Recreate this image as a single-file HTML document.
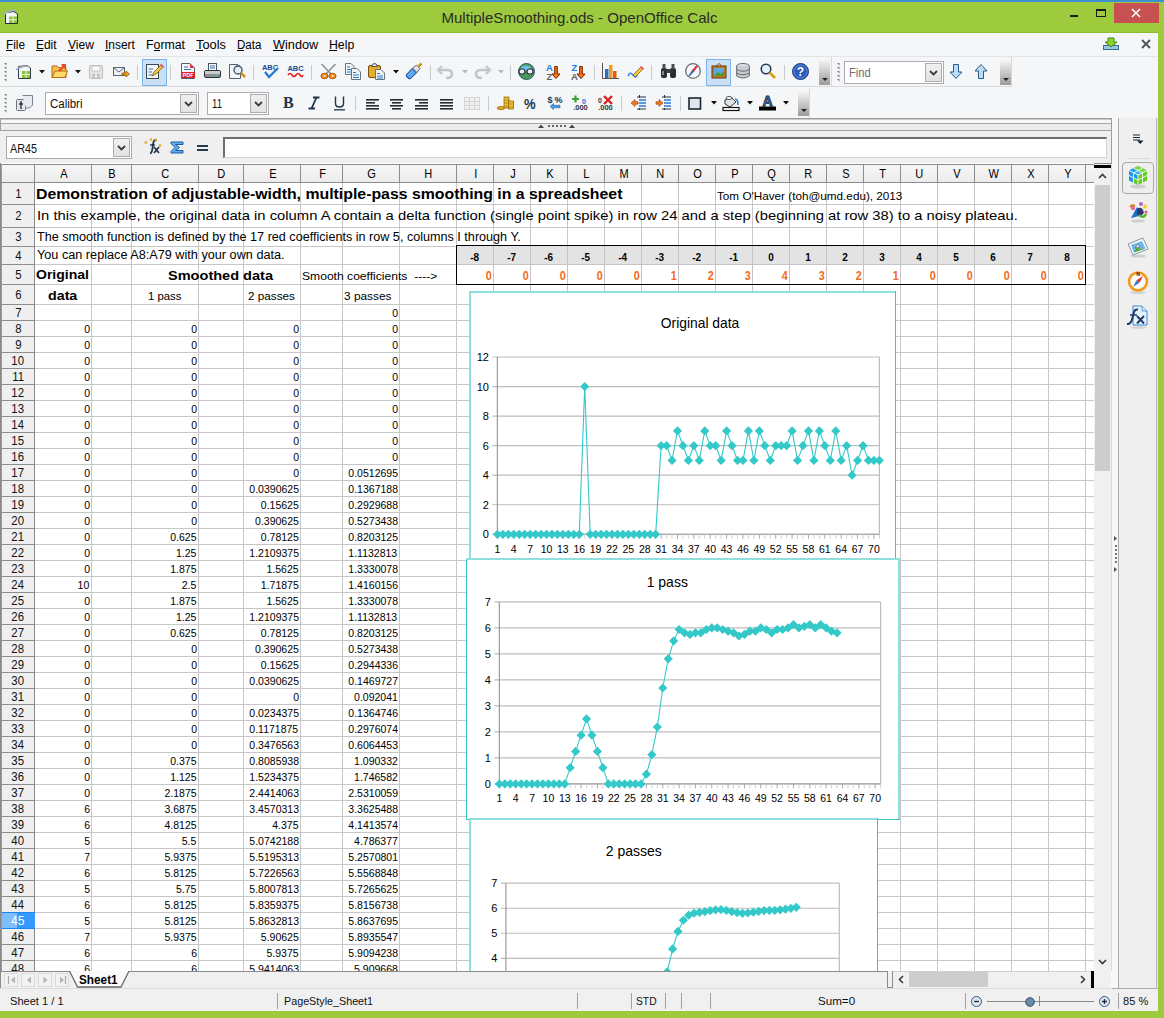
<!DOCTYPE html><html><head><meta charset="utf-8"><style>
*{margin:0;padding:0;box-sizing:border-box}
body{width:1164px;height:1018px;overflow:hidden;position:relative;background:#f5f6f7;font-family:"Liberation Sans",sans-serif}
body div{position:absolute}
.t{white-space:pre}
svg{position:absolute;overflow:visible}
</style></head><body>
<div style="left:0px;top:0px;width:1164px;height:2px;background:#3b8ed0"></div>
<div style="left:0px;top:2px;width:1164px;height:30px;background:#9dcb3d"></div>
<div style="left:0px;top:32px;width:1164px;height:1px;background:#8fbb35"></div>
<svg style="left:3px;top:8px" width="16" height="17" viewBox="0 0 16 17">
<path d="M2.5 4.5 L11 3.5 L14.5 6 V15.5 H2.5 Z" fill="#f2f4f6" stroke="#1e2a36" stroke-width="1"/>
<path d="M0.5 7 Q5 2 13 2.5" stroke="#a8b4bc" stroke-width="1.8" fill="none"/>
<rect x="6" y="8.5" width="8" height="6.5" fill="#8cc43c"/>
<path d="M10 8.5 V15 M6 11.75 H14" stroke="#eaf7d2" stroke-width="1"/>
</svg>
<div class="t" style="left:441.55px;top:10.33px;font-size:15px;line-height:15px;color:#2a2a2a;transform:scaleX(1.0040);transform-origin:center top;">MultipleSmoothing.ods - OpenOffice Calc</div>
<div style="left:1070px;top:15px;width:8px;height:2px;background:#1a1a1a"></div>
<div style="left:1096px;top:9px;width:10px;height:8px;border:1px solid #1a1a1a;border-top-width:2px"></div>
<div style="left:1114px;top:3px;width:45px;height:20px;background:#c75050"></div>
<svg style="left:1129px;top:8px" width="14" height="10" viewBox="0 0 14 10"><path d="M3 1 L11 9 M11 1 L3 9" stroke="#fff" stroke-width="1.6"/></svg>
<div style="left:1158px;top:32px;width:6px;height:986px;background:#9dcb3d"></div>
<div style="left:0px;top:1011px;width:1164px;height:7px;background:#9dcb3d"></div>
<div style="left:0px;top:33px;width:1158px;height:24px;background:#f5f6f7"></div>
<div style="left:0px;top:56px;width:1158px;height:1px;background:#e3e4e6"></div>
<div class="t" style="left:5.90px;top:38.66px;font-size:12px;line-height:12px;color:#000;transform:scaleX(0.9811);transform-origin:left top;">File</div>
<div style="left:6px;top:50px;width:6px;height:1px;background:#000"></div>
<div class="t" style="left:36.00px;top:38.66px;font-size:12px;line-height:12px;color:#000;transform:scaleX(0.9963);transform-origin:left top;">Edit</div>
<div style="left:36px;top:50px;width:7px;height:1px;background:#000"></div>
<div class="t" style="left:67.70px;top:38.66px;font-size:12px;line-height:12px;color:#000;transform:scaleX(1.0083);transform-origin:left top;">View</div>
<div style="left:68px;top:50px;width:7px;height:1px;background:#000"></div>
<div class="t" style="left:104.80px;top:38.66px;font-size:12px;line-height:12px;color:#000;transform:scaleX(0.9965);transform-origin:left top;">Insert</div>
<div style="left:105px;top:50px;width:5px;height:1px;background:#000"></div>
<div class="t" style="left:145.80px;top:38.66px;font-size:12px;line-height:12px;color:#000;transform:scaleX(1.0272);transform-origin:left top;">Format</div>
<div style="left:154px;top:50px;width:6px;height:1px;background:#000"></div>
<div class="t" style="left:195.90px;top:38.66px;font-size:12px;line-height:12px;color:#000;transform:scaleX(1.0665);transform-origin:left top;">Tools</div>
<div style="left:196px;top:50px;width:7px;height:1px;background:#000"></div>
<div class="t" style="left:236.90px;top:38.66px;font-size:12px;line-height:12px;color:#000;transform:scaleX(0.9609);transform-origin:left top;">Data</div>
<div style="left:237px;top:50px;width:7px;height:1px;background:#000"></div>
<div class="t" style="left:272.50px;top:38.66px;font-size:12px;line-height:12px;color:#000;transform:scaleX(1.0606);transform-origin:left top;">Window</div>
<div style="left:273px;top:50px;width:11px;height:1px;background:#000"></div>
<div class="t" style="left:328.90px;top:38.66px;font-size:12px;line-height:12px;color:#000;transform:scaleX(1.0218);transform-origin:left top;">Help</div>
<div style="left:329px;top:50px;width:8px;height:1px;background:#000"></div>
<svg style="left:1103px;top:37px" width="17" height="14" viewBox="0 0 17 14">
<rect x="0.5" y="8.5" width="15" height="4" fill="#9cc8e8" stroke="#3a6a8a"/>
<path d="M5 1 H11 V5 H14 L8 10 L2 5 H5 Z" fill="#8fd22a" stroke="#3f8a10" stroke-width="1"/>
</svg>
<svg style="left:1141px;top:39px" width="10" height="10" viewBox="0 0 10 10"><path d="M1 1 L9 9 M9 1 L1 9" stroke="#4a525a" stroke-width="1.8"/></svg>
<div style="left:0px;top:57px;width:831px;height:30px;background:#f5f6f7;border-bottom:1px solid #d9dadc"></div>
<div style="left:831px;top:57px;width:181px;height:30px;background:#f5f6f7;border:1px solid #d9dadc;border-top:none"></div>
<div style="left:0px;top:88px;width:810px;height:30px;background:#f5f6f7;border-right:1px solid #d9dadc"></div>
<svg style="left:4px;top:63px" width="3" height="3" viewBox="0 0 3 3"><path d="M0 0 H2.5 V2.5 Z" fill="#7a7a7a"/></svg>
<svg style="left:4px;top:67px" width="3" height="3" viewBox="0 0 3 3"><path d="M0 0 H2.5 V2.5 Z" fill="#7a7a7a"/></svg>
<svg style="left:4px;top:71px" width="3" height="3" viewBox="0 0 3 3"><path d="M0 0 H2.5 V2.5 Z" fill="#7a7a7a"/></svg>
<svg style="left:4px;top:75px" width="3" height="3" viewBox="0 0 3 3"><path d="M0 0 H2.5 V2.5 Z" fill="#7a7a7a"/></svg>
<svg style="left:4px;top:79px" width="3" height="3" viewBox="0 0 3 3"><path d="M0 0 H2.5 V2.5 Z" fill="#7a7a7a"/></svg>
<svg style="left:4px;top:94px" width="3" height="3" viewBox="0 0 3 3"><path d="M0 0 H2.5 V2.5 Z" fill="#7a7a7a"/></svg>
<svg style="left:4px;top:98px" width="3" height="3" viewBox="0 0 3 3"><path d="M0 0 H2.5 V2.5 Z" fill="#7a7a7a"/></svg>
<svg style="left:4px;top:102px" width="3" height="3" viewBox="0 0 3 3"><path d="M0 0 H2.5 V2.5 Z" fill="#7a7a7a"/></svg>
<svg style="left:4px;top:106px" width="3" height="3" viewBox="0 0 3 3"><path d="M0 0 H2.5 V2.5 Z" fill="#7a7a7a"/></svg>
<svg style="left:4px;top:110px" width="3" height="3" viewBox="0 0 3 3"><path d="M0 0 H2.5 V2.5 Z" fill="#7a7a7a"/></svg>
<svg style="left:16px;top:63px" width="16" height="17" viewBox="0 0 16 17"><path d="M2.5 3.5 L11 2.5 L14.5 5 V15.5 H2.5 Z" fill="#f4f6f8" stroke="#2d3a48"/><path d="M0 7 Q6 2 13 3.5" stroke="#9ab" stroke-width="1.6" fill="none"/><rect x="6" y="8" width="8" height="7" fill="#8cc43c"/><path d="M10 8 V15 M6 11.5 H14" stroke="#e9f7d0"/></svg>
<svg style="left:39px;top:70px" width="6" height="4" viewBox="0 0 6 4"><path d="M0 0 H6 L3 3.5 Z" fill="#111"/></svg>
<svg style="left:51px;top:63px" width="17" height="16" viewBox="0 0 17 16"><path d="M1 3 H6 L7.5 4.5 H15 V14.5 H1 Z" fill="#f6c04a" stroke="#b86a10"/><path d="M1 14.5 L4 8 H16.5 L14 14.5 Z" fill="#fcd96a" stroke="#b86a10"/><path d="M8 8 L14 2 M10.5 2 H14 V5.5" stroke="#e34c1c" stroke-width="2" fill="none"/></svg>
<svg style="left:75px;top:70px" width="6" height="4" viewBox="0 0 6 4"><path d="M0 0 H6 L3 3.5 Z" fill="#111"/></svg>
<svg style="left:89px;top:65px" width="14" height="14" viewBox="0 0 14 14"><rect x="0.5" y="0.5" width="13" height="13" rx="1.5" fill="#e6e6e6" stroke="#bcbcbc"/><rect x="3" y="1" width="8" height="5" fill="#fafafa" stroke="#c6c6c6"/><rect x="3" y="9" width="3" height="4" fill="#c6c6c6"/><rect x="8" y="9" width="3" height="4" fill="#c6c6c6"/></svg>
<svg style="left:113px;top:67px" width="17" height="11" viewBox="0 0 17 11"><rect x="0.5" y="0.5" width="11" height="8" fill="#eef2f6" stroke="#5a6470"/><path d="M0.5 0.5 L6 5 L11.5 0.5" stroke="#5a6470" fill="none"/><path d="M9 6 H13 V4 L16.5 7 L13 10 V8 H9 Z" fill="#f2a020" stroke="#9a5a00" stroke-width="0.8"/></svg>
<div style="left:137px;top:65px;width:1px;height:15px;background:#c9cbce"></div>
<div style="left:142px;top:59px;width:25px;height:27px;background:#c9e0f7;border:1px solid #7eb4ea"></div>
<svg style="left:146px;top:63px" width="17" height="17" viewBox="0 0 17 17"><rect x="0.5" y="1.5" width="12" height="14" fill="#f4f6f8" stroke="#3c4650"/><path d="M2.5 6 H7 M2.5 9 H6 M2.5 12 H6" stroke="#3a70b0"/><path d="M6 13 L8 9 L15 2 L17 4 L10 11 Z" fill="#f5c93a" stroke="#7a5a10" stroke-width="0.8"/><path d="M14.5 1.5 L17.5 4.5" stroke="#e05a70" stroke-width="2"/></svg>
<div style="left:170px;top:65px;width:1px;height:15px;background:#c9cbce"></div>
<svg style="left:181px;top:63px" width="14" height="16" viewBox="0 0 14 16"><path d="M0.5 0.5 H9 L13.5 5 V15.5 H0.5 Z" fill="#f4f6f8" stroke="#55606a"/><path d="M9 0.5 L13.5 5 H9 Z" fill="#e03a3a"/><path d="M3 4 H7 M3 6.5 H10" stroke="#3a70b0"/><rect x="0" y="9" width="14" height="6" fill="#d82020"/><text x="7" y="14" font-size="5.5" font-weight="bold" fill="#fff" text-anchor="middle" font-family="Liberation Sans">PDF</text></svg>
<svg style="left:204px;top:63px" width="17" height="16" viewBox="0 0 17 16"><rect x="4.5" y="0.5" width="8" height="7" fill="#f4f6f8" stroke="#4a5560"/><path d="M6 3 H11 M6 5 H11" stroke="#3a70b0"/><rect x="0.5" y="7.5" width="16" height="7" rx="1.5" fill="#8a9096" stroke="#2a3038"/><rect x="1" y="8" width="15" height="3" fill="#c8ccd0"/><circle cx="13" cy="12" r="0.9" fill="#4c4"/></svg>
<svg style="left:229px;top:63px" width="17" height="16" viewBox="0 0 17 16"><path d="M0.5 1.5 H9 L11.5 4 V15.5 H0.5 Z" fill="#f4f6f8" stroke="#55606a"/><circle cx="9" cy="7" r="4" fill="#dfefff" stroke="#3a4a58" stroke-width="1.3"/><path d="M12 10 L16 14" stroke="#c8901a" stroke-width="2.5"/></svg>
<div style="left:253px;top:65px;width:1px;height:15px;background:#c9cbce"></div>
<svg style="left:262px;top:63px" width="17" height="16" viewBox="0 0 17 16"><text x="8" y="7" font-size="7.5" font-weight="bold" fill="#1c4a8a" text-anchor="middle" font-family="Liberation Sans">ABC</text><path d="M3 9 L7 14 L16 5" stroke="#2a7ad8" stroke-width="2.4" fill="none"/></svg>
<svg style="left:287px;top:63px" width="17" height="16" viewBox="0 0 17 16"><text x="8.5" y="8" font-size="7.5" font-weight="bold" fill="#1c4a8a" text-anchor="middle" font-family="Liberation Sans">ABC</text><path d="M1 12 Q3 9 5 12 T9 12 T13 12 T16 12" stroke="#e02020" stroke-width="1.6" fill="none"/></svg>
<div style="left:311px;top:65px;width:1px;height:15px;background:#c9cbce"></div>
<svg style="left:320px;top:63px" width="17" height="17" viewBox="0 0 17 17"><path d="M1.5 1 L11.5 11.5 M15.5 1 L5.5 11.5" stroke="#8a9096" stroke-width="1.5"/><ellipse cx="4.5" cy="13" rx="3.6" ry="2.8" fill="#f08a1a" stroke="#a04a00" stroke-width="0.8"/><ellipse cx="12.5" cy="13" rx="3.6" ry="2.8" fill="#f08a1a" stroke="#a04a00" stroke-width="0.8"/><circle cx="4.5" cy="13" r="1" fill="#fde"/><circle cx="12.5" cy="13" r="1" fill="#fde"/></svg>
<svg style="left:345px;top:63px" width="16" height="17" viewBox="0 0 16 17"><path d="M0.5 0.5 H6 L9 3.5 V11.5 H0.5 Z" fill="#f2f5f8" stroke="#6a747e"/><path d="M2 4 H5 M2 6.5 H7 M2 9 H7" stroke="#2a78c8" stroke-width="1"/><path d="M6.5 5.5 H12 L15.5 9 V16.5 H6.5 Z" fill="#f2f5f8" stroke="#6a747e"/><path d="M8 9.5 H11 M8 12 H14 M8 14.5 H14" stroke="#2a78c8" stroke-width="1"/></svg>
<svg style="left:368px;top:63px" width="17" height="17" viewBox="0 0 17 17"><rect x="0.5" y="2.5" width="12" height="12" rx="1.5" fill="#e2b02a" stroke="#7a5010"/><path d="M3.5 3.5 L5 0.8 H8 L9.5 3.5 Z" fill="#e8ecf0" stroke="#555"/><path d="M7.5 6.5 H13 L16.5 10 V16.5 H7.5 Z" fill="#f2f5f8" stroke="#6a747e"/><path d="M9 10.5 H12 M9 13 H15 M9 15 H15" stroke="#2a78c8" stroke-width="1"/></svg>
<svg style="left:393px;top:70px" width="6" height="4" viewBox="0 0 6 4"><path d="M0 0 H6 L3 3.5 Z" fill="#111"/></svg>
<svg style="left:405px;top:63px" width="17" height="17" viewBox="0 0 17 17"><path d="M1 12 L7 5.5 L11.5 10 L5 16 Q2 16 1 12 Z" fill="#4a98e8" stroke="#1a4a98" stroke-width="1"/><path d="M3 12.5 L7.5 8 M4.5 14 L9 9.5" stroke="#9ad0ff" stroke-width="0.9"/><path d="M7.5 5 L11.5 2 L15 5.5 L12 9.5 Z" fill="#dfe4ea" stroke="#445" stroke-width="0.8"/><path d="M13 4 L16.5 0.5" stroke="#c89a20" stroke-width="2.6"/></svg>
<div style="left:430px;top:65px;width:1px;height:15px;background:#c9cbce"></div>
<svg style="left:437px;top:63px" width="17" height="16" viewBox="0 0 17 16"><path d="M5 3 L1 7 L5 11" stroke="#c2c6ca" stroke-width="2.2" fill="none"/><path d="M2 7 H10 Q15 7 15 11 Q15 15 9 15" stroke="#c2c6ca" stroke-width="2.6" fill="none"/></svg>
<svg style="left:462px;top:70px" width="6" height="4" viewBox="0 0 6 4"><path d="M0 0 H6 L3 3.5 Z" fill="#b5b8bb"/></svg>
<svg style="left:474px;top:63px" width="17" height="16" viewBox="0 0 17 16"><path d="M12 3 L16 7 L12 11" stroke="#c2c6ca" stroke-width="2.2" fill="none"/><path d="M15 7 H7 Q2 7 2 11 Q2 15 8 15" stroke="#c2c6ca" stroke-width="2.6" fill="none"/></svg>
<svg style="left:498px;top:70px" width="6" height="4" viewBox="0 0 6 4"><path d="M0 0 H6 L3 3.5 Z" fill="#b5b8bb"/></svg>
<div style="left:510px;top:65px;width:1px;height:15px;background:#c9cbce"></div>
<svg style="left:518px;top:63px" width="17" height="17" viewBox="0 0 17 17"><circle cx="8.5" cy="8.5" r="8" fill="#4a9a5a" stroke="#2a5a70"/><path d="M3 4 Q8 1 13 4 Q10 8 4 9 Z" fill="#6ac0e8"/><rect x="1" y="6" width="6" height="5" rx="2.5" fill="#eef" stroke="#334" stroke-width="1.2"/><rect x="9" y="6" width="6" height="5" rx="2.5" fill="#eef" stroke="#334" stroke-width="1.2"/></svg>
<svg style="left:545px;top:63px" width="17" height="18" viewBox="0 0 17 18"><text x="4.5" y="8" font-size="9.5" font-weight="bold" fill="#1a7ae0" text-anchor="middle" font-family="Liberation Sans">A</text><text x="4.5" y="17" font-size="9.5" font-weight="bold" fill="#5a646e" text-anchor="middle" font-family="Liberation Sans">Z</text><path d="M9.7 3.5 H12.3 V11 H15 L11 15.5 L7 11 H9.7 Z" fill="#f57a10" stroke="#7a1a00" stroke-width="1"/></svg>
<svg style="left:570px;top:63px" width="17" height="18" viewBox="0 0 17 18"><text x="4.5" y="8" font-size="9.5" font-weight="bold" fill="#1a7ae0" text-anchor="middle" font-family="Liberation Sans">Z</text><text x="4.5" y="17" font-size="9.5" font-weight="bold" fill="#5a646e" text-anchor="middle" font-family="Liberation Sans">A</text><path d="M9.7 3.5 H12.3 V11 H15 L11 15.5 L7 11 H9.7 Z" fill="#f57a10" stroke="#7a1a00" stroke-width="1"/></svg>
<div style="left:594px;top:65px;width:1px;height:15px;background:#c9cbce"></div>
<svg style="left:602px;top:63px" width="17" height="16" viewBox="0 0 17 16"><path d="M0.5 0 V15.5 H17" stroke="#555" fill="none"/><rect x="3" y="6" width="3.5" height="9" fill="#2a70c8"/><rect x="7" y="2" width="3.5" height="13" fill="#f0a020"/><rect x="11" y="8" width="3.5" height="7" fill="#e05a1a"/></svg>
<svg style="left:627px;top:63px" width="16" height="16" viewBox="0 0 16 16"><path d="M1 13 Q3 8 6 12 T10 12" stroke="#3a8ae0" stroke-width="1.6" fill="none"/><path d="M6 12 L14 4 L16 6 L8 14 Z" fill="#f5c93a" stroke="#7a5a10" stroke-width="0.8"/><path d="M13.5 3.5 L16.5 6.5" stroke="#e05a70" stroke-width="2"/></svg>
<div style="left:651px;top:65px;width:1px;height:15px;background:#c9cbce"></div>
<svg style="left:660px;top:63px" width="17" height="16" viewBox="0 0 17 16"><rect x="1" y="5" width="6" height="10" rx="2" fill="#2a2e33"/><rect x="10" y="5" width="6" height="10" rx="2" fill="#2a2e33"/><rect x="2.5" y="1" width="3" height="5" fill="#4a4e53"/><rect x="11.5" y="1" width="3" height="5" fill="#4a4e53"/><rect x="6" y="6" width="5" height="4" fill="#3a3e43"/><rect x="2" y="8" width="2" height="4" fill="#889"/></svg>
<svg style="left:685px;top:63px" width="16" height="16" viewBox="0 0 16 16"><circle cx="8" cy="8" r="7.3" fill="#f8f8f8" stroke="#6a6e73" stroke-width="1.3"/><path d="M12 3 L7 9 L9 7 Z M12 3 L9 9 L7 7 Z" fill="#e03030"/><path d="M4 13 L9 7 L7 9 Z M4 13 L7 7 L9 9 Z" fill="#3a70c8"/><path d="M12 3 L4 13" stroke="#3a70c8" stroke-width="1.8"/><path d="M12 3 L8 8" stroke="#e03030" stroke-width="2"/></svg>
<div style="left:706px;top:59px;width:25px;height:27px;background:#c9e0f7;border:1px solid #7eb4ea"></div>
<svg style="left:711px;top:63px" width="16" height="16" viewBox="0 0 16 16"><path d="M5 3 L8 0.5 L11 3" stroke="#8a5a20" fill="none"/><rect x="1" y="3" width="14" height="12" fill="#c07a20" stroke="#6a3a10"/><rect x="3" y="5" width="10" height="8" fill="#60a8e0"/><path d="M3 13 L7 9 L10 11 L13 8 V13 Z" fill="#4a9a30"/></svg>
<svg style="left:736px;top:63px" width="14" height="16" viewBox="0 0 14 16"><ellipse cx="7" cy="3" rx="6.3" ry="2.5" fill="#dde1e5" stroke="#606870"/><path d="M0.7 3 V13 Q7 17 13.3 13 V3" fill="#c8cdd2" stroke="#606870"/><path d="M0.7 6.5 Q7 10 13.3 6.5 M0.7 10 Q7 13.5 13.3 10" stroke="#606870" fill="none"/></svg>
<svg style="left:760px;top:63px" width="16" height="16" viewBox="0 0 16 16"><circle cx="6" cy="6" r="4.8" fill="#dff0ff" stroke="#2a3a4a" stroke-width="1.5"/><path d="M9.5 9.5 L15 15" stroke="#d8a020" stroke-width="2.8"/></svg>
<div style="left:784px;top:65px;width:1px;height:15px;background:#c9cbce"></div>
<svg style="left:792px;top:63px" width="17" height="17" viewBox="0 0 17 17"><circle cx="8.5" cy="8.5" r="8" fill="#2a5ab8" stroke="#1a3a80"/><circle cx="8.5" cy="8.5" r="6.5" fill="none" stroke="#6a9ae8" stroke-width="0.8"/><text x="8.5" y="13.2" font-size="12" font-weight="bold" fill="#fff" text-anchor="middle" font-family="Liberation Sans">?</text></svg>
<div style="left:819px;top:58px;width:11px;height:27px;background:linear-gradient(#fafafa,#9b9b9b)"></div>
<svg style="left:822px;top:78px" width="6" height="4" viewBox="0 0 6 4"><path d="M0 0 H6 L3 3 Z" fill="#222"/></svg>
<svg style="left:837px;top:63px" width="3" height="3" viewBox="0 0 3 3"><path d="M0 0 H2.5 V2.5 Z" fill="#7a7a7a"/></svg>
<svg style="left:837px;top:67px" width="3" height="3" viewBox="0 0 3 3"><path d="M0 0 H2.5 V2.5 Z" fill="#7a7a7a"/></svg>
<svg style="left:837px;top:71px" width="3" height="3" viewBox="0 0 3 3"><path d="M0 0 H2.5 V2.5 Z" fill="#7a7a7a"/></svg>
<svg style="left:837px;top:75px" width="3" height="3" viewBox="0 0 3 3"><path d="M0 0 H2.5 V2.5 Z" fill="#7a7a7a"/></svg>
<svg style="left:837px;top:79px" width="3" height="3" viewBox="0 0 3 3"><path d="M0 0 H2.5 V2.5 Z" fill="#7a7a7a"/></svg>
<div style="left:844px;top:61px;width:100px;height:23px;background:#fff;border:1px solid #abadb3"></div>
<div style="left:925px;top:63px;width:17px;height:19px;background:linear-gradient(#f0f0f0,#e2e2e2);border:1px solid #acacac"></div>
<svg style="left:929.0px;top:69.5px" width="9" height="6" viewBox="0 0 9 6"><path d="M1 1 L4.5 4.5 L8 1" stroke="#3c3c3c" stroke-width="1.8" fill="none"/></svg>
<div class="t" style="left:848.80px;top:66.66px;font-size:12px;line-height:12px;color:#6e6e6e;transform:scaleX(0.9296);transform-origin:left top;">Find</div>
<svg style="left:949px;top:64px" width="14" height="15" viewBox="0 0 14 15"><path d="M4.5 0.5 H9.5 V8 H13 L7 14.5 L1 8 H4.5 Z" fill="#bcdcf4" stroke="#2a5a8a" stroke-width="1"/></svg>
<svg style="left:974px;top:64px" width="14" height="15" viewBox="0 0 14 15"><path d="M4.5 14.5 H9.5 V7 H13 L7 0.5 L1 7 H4.5 Z" fill="#bcdcf4" stroke="#2a5a8a" stroke-width="1"/></svg>
<div style="left:1000px;top:59px;width:11px;height:26px;background:linear-gradient(#fafafa,#9b9b9b)"></div>
<svg style="left:1003px;top:78px" width="6" height="4" viewBox="0 0 6 4"><path d="M0 0 H6 L3 3 Z" fill="#222"/></svg>
<svg style="left:16px;top:95px" width="17" height="16" viewBox="0 0 17 16"><rect x="0.5" y="4.5" width="9" height="11" rx="1" fill="#e4e8ec" stroke="#6a7480"/><path d="M5 6 V14 M3 9 H7" stroke="#333" stroke-width="1.4"/><path d="M6.5 0.5 H16.5 V10 L13.5 13 H10" fill="#e8ecf0" stroke="#7a848e"/></svg>
<div style="left:45px;top:92px;width:154px;height:23px;background:#fff;border:1px solid #abadb3"></div>
<div style="left:180px;top:94px;width:17px;height:19px;background:linear-gradient(#f0f0f0,#e2e2e2);border:1px solid #acacac"></div>
<svg style="left:184.0px;top:100.5px" width="9" height="6" viewBox="0 0 9 6"><path d="M1 1 L4.5 4.5 L8 1" stroke="#3c3c3c" stroke-width="1.8" fill="none"/></svg>
<div class="t" style="left:50.00px;top:98.06px;font-size:12px;line-height:12px;color:#111;transform:scaleX(0.9550);transform-origin:left top;">Calibri</div>
<div style="left:207px;top:92px;width:62px;height:23px;background:#fff;border:1px solid #abadb3"></div>
<div style="left:250px;top:94px;width:17px;height:19px;background:linear-gradient(#f0f0f0,#e2e2e2);border:1px solid #acacac"></div>
<svg style="left:254.0px;top:100.5px" width="9" height="6" viewBox="0 0 9 6"><path d="M1 1 L4.5 4.5 L8 1" stroke="#3c3c3c" stroke-width="1.8" fill="none"/></svg>
<div class="t" style="left:211.70px;top:97.96px;font-size:12px;line-height:12px;color:#111;transform:scaleX(0.8030);transform-origin:left top;">11</div>
<div class="t" style="left:283px;top:95px;font:bold 16px/16px 'Liberation Serif';color:#1e3448">B</div>
<svg style="left:308px;top:97px" width="12" height="12" viewBox="0 0 12 12"><path d="M5 0.5 H11.5 M0.5 11.5 H7 M8.5 0.5 L3.5 11.5" stroke="#1e3448" stroke-width="1.8" fill="none"/></svg>
<svg style="left:333px;top:96px" width="13" height="15" viewBox="0 0 13 15"><path d="M2.5 0.5 V7.5 Q2.5 11 6.5 11 Q10.5 11 10.5 7.5 V0.5" stroke="#1e3448" stroke-width="1.4" fill="none"/><path d="M1 13.8 H12" stroke="#1e3448" stroke-width="1.3"/></svg>
<div style="left:355px;top:96px;width:1px;height:15px;background:#c9cbce"></div>
<svg style="left:366px;top:99px" width="14" height="12" viewBox="0 0 14 12"><rect x="0" y="0" width="13" height="1.6" fill="#222d38"/><rect x="0" y="3" width="9" height="1.6" fill="#222d38"/><rect x="0" y="6" width="13" height="1.6" fill="#222d38"/><rect x="0" y="9" width="13" height="1.6" fill="#222d38"/></svg>
<svg style="left:390px;top:99px" width="14" height="12" viewBox="0 0 14 12"><rect x="0" y="0" width="13" height="1.6" fill="#222d38"/><rect x="2" y="3" width="9" height="1.6" fill="#222d38"/><rect x="0" y="6" width="13" height="1.6" fill="#222d38"/><rect x="2" y="9" width="9" height="1.6" fill="#222d38"/></svg>
<svg style="left:415px;top:99px" width="14" height="12" viewBox="0 0 14 12"><rect x="0" y="0" width="13" height="1.6" fill="#222d38"/><rect x="4" y="3" width="9" height="1.6" fill="#222d38"/><rect x="0" y="6" width="13" height="1.6" fill="#222d38"/><rect x="0" y="9" width="13" height="1.6" fill="#222d38"/></svg>
<svg style="left:440px;top:99px" width="14" height="12" viewBox="0 0 14 12"><rect x="0" y="0" width="13" height="1.6" fill="#222d38"/><rect x="0" y="3" width="13" height="1.6" fill="#222d38"/><rect x="0" y="6" width="13" height="1.6" fill="#222d38"/><rect x="0" y="9" width="13" height="1.6" fill="#222d38"/></svg>
<svg style="left:464px;top:97px" width="17" height="13" viewBox="0 0 17 13"><rect x="0.5" y="0.5" width="15" height="12" fill="#f0f0f0" stroke="#d4d4d4"/><path d="M0.5 4.5 H15.5 M0.5 8.5 H15.5 M5.5 0.5 V12.5 M10.5 0.5 V12.5" stroke="#d4d4d4"/></svg>
<div style="left:488px;top:96px;width:1px;height:15px;background:#c9cbce"></div>
<svg style="left:497px;top:95px" width="17" height="15" viewBox="0 0 17 15"><ellipse cx="4" cy="13" rx="3.8" ry="1.6" fill="#e8a820" stroke="#8a5a00" stroke-width="0.7"/><rect x="7" y="2" width="5" height="11" fill="#f0c030" stroke="#8a5a00" stroke-width="0.7"/><path d="M7 5 H12 M7 8 H12 M7 11 H12" stroke="#a87a10" stroke-width="0.7"/><rect x="11.5" y="6" width="5" height="8" fill="#f0c030" stroke="#8a5a00" stroke-width="0.7"/><path d="M11.5 9 H16.5 M11.5 12 H16.5" stroke="#a87a10" stroke-width="0.7"/></svg>
<div class="t" style="left:523.50px;top:96.77px;font-size:14px;line-height:14px;font-weight:bold;color:#1e3448;transform:scaleX(0.9315);transform-origin:left top;">%</div>
<svg style="left:547px;top:95px" width="17" height="15" viewBox="0 0 17 15"><text x="3" y="8" font-size="9" font-weight="bold" fill="#1e3448" font-family="Liberation Sans" text-anchor="middle">$</text><text x="11.5" y="8" font-size="9" font-weight="bold" fill="#1e3448" font-family="Liberation Sans" text-anchor="middle">%</text><path d="M3 11.5 L6.5 8.5 V10.3 H13 V12.7 H6.5 V14.5 Z" fill="#4aa0e8" stroke="#1a5a9a" stroke-width="0.6"/></svg>
<svg style="left:572px;top:95px" width="17" height="15" viewBox="0 0 17 15"><path d="M3.5 0.5 V7.5 M0 4 H7" stroke="#3aa030" stroke-width="2.2"/><text x="12" y="9" font-size="7" font-weight="bold" fill="#2a6ad8" font-family="Liberation Sans" text-anchor="middle">0</text><text x="8.5" y="15" font-size="7.5" font-weight="bold" fill="#2a3440" font-family="Liberation Sans" text-anchor="middle">.000</text></svg>
<svg style="left:597px;top:95px" width="17" height="15" viewBox="0 0 17 15"><text x="3" y="7.5" font-size="7" font-weight="bold" fill="#2a3440" font-family="Liberation Sans" text-anchor="middle">0</text><text x="8.5" y="15" font-size="7.5" font-weight="bold" fill="#2a3440" font-family="Liberation Sans" text-anchor="middle">.000</text><path d="M7 1 L15 9 M15 1 L7 9" stroke="#e02020" stroke-width="2.4"/></svg>
<div style="left:621px;top:96px;width:1px;height:15px;background:#c9cbce"></div>
<svg style="left:630px;top:95px" width="17" height="15" viewBox="0 0 17 15"><path d="M1 8 L5 4.5 V6.8 H8 V9.2 H5 V11.5 Z" fill="#f07a20" stroke="#a03a00" stroke-width="0.6"/><path d="M7 2 H16 M7 14 H16" stroke="#2a3440" stroke-width="1.2"/><path d="M9 5 H16 M9 8 H16 M9 11 H16" stroke="#2a7ad8" stroke-width="1.4"/><path d="M9.5 0 V3 M9.5 13 V15" stroke="#2a3440"/></svg>
<svg style="left:655px;top:95px" width="17" height="15" viewBox="0 0 17 15"><path d="M8 8 L4 4.5 V6.8 H1 V9.2 H4 V11.5 Z" fill="#f07a20" stroke="#a03a00" stroke-width="0.6"/><path d="M7 2 H16 M7 14 H16" stroke="#2a3440" stroke-width="1.2"/><path d="M9 5 H16 M9 8 H16 M9 11 H16" stroke="#2a7ad8" stroke-width="1.4"/><path d="M9.5 0 V3 M9.5 13 V15" stroke="#2a3440"/></svg>
<div style="left:680px;top:96px;width:1px;height:15px;background:#c9cbce"></div>
<svg style="left:688px;top:97px" width="14" height="13" viewBox="0 0 14 13"><rect x="1" y="1" width="11.5" height="11" fill="#dfe6ee" stroke="#1e2630" stroke-width="1.6"/></svg>
<svg style="left:711px;top:101px" width="6" height="4" viewBox="0 0 6 4"><path d="M0 0 H6 L3 3.5 Z" fill="#111"/></svg>
<svg style="left:722px;top:95px" width="18" height="16" viewBox="0 0 18 16"><path d="M3 5 L9 2 L14 7 L8 12 L3 9 Z" fill="#dde2e8" stroke="#333" stroke-width="1"/><path d="M13 4 Q16 4 16 10" stroke="#2a7ad8" stroke-width="1.6" fill="none"/><ellipse cx="7" cy="3" rx="3" ry="1.5" fill="#fff" stroke="#333" stroke-width="0.8"/><rect x="1" y="12.5" width="16" height="3" fill="#fff" stroke="#111" stroke-width="1.2"/></svg>
<svg style="left:747px;top:101px" width="6" height="4" viewBox="0 0 6 4"><path d="M0 0 H6 L3 3.5 Z" fill="#111"/></svg>
<svg style="left:759px;top:94px" width="17" height="17" viewBox="0 0 17 17"><text x="8.5" y="11.5" font-size="14" font-weight="bold" fill="#4a80b8" stroke="#1a3050" stroke-width="0.9" text-anchor="middle" font-family="Liberation Sans">A</text><rect x="0" y="12.5" width="17" height="4" fill="#000"/></svg>
<svg style="left:783px;top:101px" width="6" height="4" viewBox="0 0 6 4"><path d="M0 0 H6 L3 3.5 Z" fill="#111"/></svg>
<div style="left:798px;top:90px;width:11px;height:26px;background:linear-gradient(#fafafa,#9b9b9b)"></div>
<svg style="left:801px;top:109px" width="6" height="4" viewBox="0 0 6 4"><path d="M0 0 H6 L3 3 Z" fill="#222"/></svg>
<div style="left:0px;top:118px;width:1111px;height:13px;background:#f7f7f7"></div>
<div style="left:0px;top:118px;width:1111px;height:1px;background:#9c9c9c"></div>
<div style="left:0px;top:119px;width:1111px;height:1px;background:#c8c8c8"></div>
<div style="left:0px;top:123px;width:1111px;height:1px;background:#a9a9a9"></div>
<div style="left:0px;top:124px;width:1111px;height:6px;background:#ececec"></div>
<div style="left:0px;top:130px;width:1111px;height:1px;background:#a2a2a2"></div>
<div style="left:0px;top:118px;width:1px;height:13px;background:#a0a0a0"></div>
<svg style="left:538px;top:124px" width="40" height="5" viewBox="0 0 40 5"><path d="M0 4 L3 0.5 L6 4 Z M31 4 L34 0.5 L37 4 Z" fill="#444"/><rect x="10" y="1" width="2" height="2" fill="#666"/><rect x="14" y="1" width="2" height="2" fill="#666"/><rect x="18" y="1" width="2" height="2" fill="#666"/><rect x="22" y="1" width="2" height="2" fill="#666"/><rect x="26" y="1" width="2" height="2" fill="#666"/></svg>
<div style="left:0px;top:131px;width:1111px;height:32px;background:#efefef"></div>
<div style="left:6px;top:136px;width:126px;height:23px;background:#fff;border:1px solid #a9abb0"></div>
<div style="left:113px;top:138px;width:17px;height:19px;background:linear-gradient(#f0f0f0,#e2e2e2);border:1px solid #acacac"></div>
<svg style="left:117.0px;top:144.5px" width="9" height="6" viewBox="0 0 9 6"><path d="M1 1 L4.5 4.5 L8 1" stroke="#3c3c3c" stroke-width="1.8" fill="none"/></svg>
<div class="t" style="left:10.30px;top:143.26px;font-size:12px;line-height:12px;color:#111;transform:scaleX(0.8995);transform-origin:left top;">AR45</div>
<svg style="left:143px;top:137px" width="18" height="18" viewBox="0 0 18 18"><path d="M7 16.5 Q9 16 9.5 11 L10.5 5 Q11 3 13 3" stroke="#1e3448" stroke-width="1.8" fill="none"/><path d="M7 8 H12" stroke="#1e3448" stroke-width="1.4"/><path d="M11 10 L16 16 M16 10 L11 16" stroke="#1e3448" stroke-width="1.7"/><path d="M3 4 L4 5.5 L3 7 L1.5 5.5 Z M8 1 L9 2.5 L8 4 L7 2.5 Z M13 1.5 L14 3 L13 4.5 L12 3 Z M17 7 L18 8.5 L17 10 L16 8.5 Z" fill="#f5c520" stroke="#d09010" stroke-width="0.5"/></svg>
<svg style="left:170px;top:141px" width="14" height="13" viewBox="0 0 14 13"><path d="M1 1 H13 V3.5 H5.5 L9.5 6.5 L5.5 9.5 H13 V12 H1 V10.5 L5 6.5 L1 2.5 Z" fill="#5ab0f0" stroke="#1a5aa0" stroke-width="1"/></svg>
<div style="left:197px;top:145px;width:11px;height:2px;background:#26384a"></div>
<div style="left:197px;top:149px;width:11px;height:2px;background:#26384a"></div>
<div style="left:223px;top:137px;width:884px;height:21px;background:#fff;border:1px solid #d4d4d4;border-top:2px solid #6e6e6e;border-left:2px solid #6e6e6e"></div>
<div style="left:0px;top:163px;width:1094px;height:808px;background:#fff"></div>
<div style="left:1px;top:164px;width:1093px;height:18px;background:linear-gradient(#f7f7f7,#ececec)"></div>
<div style="left:1px;top:182px;width:33px;height:789px;background:#efefef"></div>
<div style="left:0px;top:164px;width:1094px;height:1px;background:#8c8c8c"></div>
<div style="left:0px;top:164px;width:2px;height:807px;background:#9a9a9a"></div>
<div style="left:34px;top:164px;width:1px;height:807px;background:#8c8c8c"></div>
<div style="left:1px;top:182px;width:1093px;height:1px;background:#8c8c8c"></div>
<div style="left:91px;top:165px;width:1px;height:17px;background:#8c8c8c"></div>
<div style="left:91px;top:183px;width:1px;height:788px;background:#c7c7c7"></div>
<div style="left:131px;top:165px;width:1px;height:17px;background:#8c8c8c"></div>
<div style="left:131px;top:183px;width:1px;height:788px;background:#c7c7c7"></div>
<div style="left:198px;top:165px;width:1px;height:17px;background:#8c8c8c"></div>
<div style="left:198px;top:183px;width:1px;height:788px;background:#c7c7c7"></div>
<div style="left:243px;top:165px;width:1px;height:17px;background:#8c8c8c"></div>
<div style="left:243px;top:183px;width:1px;height:788px;background:#c7c7c7"></div>
<div style="left:300px;top:165px;width:1px;height:17px;background:#8c8c8c"></div>
<div style="left:300px;top:183px;width:1px;height:788px;background:#c7c7c7"></div>
<div style="left:342px;top:165px;width:1px;height:17px;background:#8c8c8c"></div>
<div style="left:342px;top:183px;width:1px;height:788px;background:#c7c7c7"></div>
<div style="left:399px;top:165px;width:1px;height:17px;background:#8c8c8c"></div>
<div style="left:399px;top:183px;width:1px;height:788px;background:#c7c7c7"></div>
<div style="left:456px;top:165px;width:1px;height:17px;background:#8c8c8c"></div>
<div style="left:456px;top:183px;width:1px;height:788px;background:#c7c7c7"></div>
<div style="left:493px;top:165px;width:1px;height:17px;background:#8c8c8c"></div>
<div style="left:493px;top:183px;width:1px;height:788px;background:#c7c7c7"></div>
<div style="left:530px;top:165px;width:1px;height:17px;background:#8c8c8c"></div>
<div style="left:530px;top:183px;width:1px;height:788px;background:#c7c7c7"></div>
<div style="left:567px;top:165px;width:1px;height:17px;background:#8c8c8c"></div>
<div style="left:567px;top:183px;width:1px;height:788px;background:#c7c7c7"></div>
<div style="left:604px;top:165px;width:1px;height:17px;background:#8c8c8c"></div>
<div style="left:604px;top:183px;width:1px;height:788px;background:#c7c7c7"></div>
<div style="left:641px;top:165px;width:1px;height:17px;background:#8c8c8c"></div>
<div style="left:641px;top:183px;width:1px;height:788px;background:#c7c7c7"></div>
<div style="left:678px;top:165px;width:1px;height:17px;background:#8c8c8c"></div>
<div style="left:678px;top:183px;width:1px;height:788px;background:#c7c7c7"></div>
<div style="left:715px;top:165px;width:1px;height:17px;background:#8c8c8c"></div>
<div style="left:715px;top:183px;width:1px;height:788px;background:#c7c7c7"></div>
<div style="left:752px;top:165px;width:1px;height:17px;background:#8c8c8c"></div>
<div style="left:752px;top:183px;width:1px;height:788px;background:#c7c7c7"></div>
<div style="left:789px;top:165px;width:1px;height:17px;background:#8c8c8c"></div>
<div style="left:789px;top:183px;width:1px;height:788px;background:#c7c7c7"></div>
<div style="left:826px;top:165px;width:1px;height:17px;background:#8c8c8c"></div>
<div style="left:826px;top:183px;width:1px;height:788px;background:#c7c7c7"></div>
<div style="left:863px;top:165px;width:1px;height:17px;background:#8c8c8c"></div>
<div style="left:863px;top:183px;width:1px;height:788px;background:#c7c7c7"></div>
<div style="left:900px;top:165px;width:1px;height:17px;background:#8c8c8c"></div>
<div style="left:900px;top:183px;width:1px;height:788px;background:#c7c7c7"></div>
<div style="left:937px;top:165px;width:1px;height:17px;background:#8c8c8c"></div>
<div style="left:937px;top:183px;width:1px;height:788px;background:#c7c7c7"></div>
<div style="left:974px;top:165px;width:1px;height:17px;background:#8c8c8c"></div>
<div style="left:974px;top:183px;width:1px;height:788px;background:#c7c7c7"></div>
<div style="left:1011px;top:165px;width:1px;height:17px;background:#8c8c8c"></div>
<div style="left:1011px;top:183px;width:1px;height:788px;background:#c7c7c7"></div>
<div style="left:1048px;top:165px;width:1px;height:17px;background:#8c8c8c"></div>
<div style="left:1048px;top:183px;width:1px;height:788px;background:#c7c7c7"></div>
<div style="left:1085px;top:165px;width:1px;height:17px;background:#8c8c8c"></div>
<div style="left:1085px;top:183px;width:1px;height:788px;background:#c7c7c7"></div>
<div class="t" style="left:59.80px;top:167.66px;font-size:12px;line-height:12px;color:#000;transform:scaleX(0.9200);transform-origin:center top;">A</div>
<div class="t" style="left:108.30px;top:167.66px;font-size:12px;line-height:12px;color:#000;transform:scaleX(0.9200);transform-origin:center top;">B</div>
<div class="t" style="left:161.46px;top:167.66px;font-size:12px;line-height:12px;color:#000;transform:scaleX(0.9200);transform-origin:center top;">C</div>
<div class="t" style="left:217.46px;top:167.66px;font-size:12px;line-height:12px;color:#000;transform:scaleX(0.9200);transform-origin:center top;">D</div>
<div class="t" style="left:268.80px;top:167.66px;font-size:12px;line-height:12px;color:#000;transform:scaleX(0.9200);transform-origin:center top;">E</div>
<div class="t" style="left:318.64px;top:167.66px;font-size:12px;line-height:12px;color:#000;transform:scaleX(0.9200);transform-origin:center top;">F</div>
<div class="t" style="left:367.14px;top:167.66px;font-size:12px;line-height:12px;color:#000;transform:scaleX(0.9200);transform-origin:center top;">G</div>
<div class="t" style="left:424.46px;top:167.66px;font-size:12px;line-height:12px;color:#000;transform:scaleX(0.9200);transform-origin:center top;">H</div>
<div class="t" style="left:474.14px;top:167.66px;font-size:12px;line-height:12px;color:#000;transform:scaleX(0.9200);transform-origin:center top;">I</div>
<div class="t" style="left:509.80px;top:167.66px;font-size:12px;line-height:12px;color:#000;transform:scaleX(0.9200);transform-origin:center top;">J</div>
<div class="t" style="left:545.80px;top:167.66px;font-size:12px;line-height:12px;color:#000;transform:scaleX(0.9200);transform-origin:center top;">K</div>
<div class="t" style="left:583.46px;top:167.66px;font-size:12px;line-height:12px;color:#000;transform:scaleX(0.9200);transform-origin:center top;">L</div>
<div class="t" style="left:618.80px;top:167.66px;font-size:12px;line-height:12px;color:#000;transform:scaleX(0.9200);transform-origin:center top;">M</div>
<div class="t" style="left:656.46px;top:167.66px;font-size:12px;line-height:12px;color:#000;transform:scaleX(0.9200);transform-origin:center top;">N</div>
<div class="t" style="left:693.14px;top:167.66px;font-size:12px;line-height:12px;color:#000;transform:scaleX(0.9200);transform-origin:center top;">O</div>
<div class="t" style="left:730.80px;top:167.66px;font-size:12px;line-height:12px;color:#000;transform:scaleX(0.9200);transform-origin:center top;">P</div>
<div class="t" style="left:767.14px;top:167.66px;font-size:12px;line-height:12px;color:#000;transform:scaleX(0.9200);transform-origin:center top;">Q</div>
<div class="t" style="left:804.46px;top:167.66px;font-size:12px;line-height:12px;color:#000;transform:scaleX(0.9200);transform-origin:center top;">R</div>
<div class="t" style="left:841.80px;top:167.66px;font-size:12px;line-height:12px;color:#000;transform:scaleX(0.9200);transform-origin:center top;">S</div>
<div class="t" style="left:879.14px;top:167.66px;font-size:12px;line-height:12px;color:#000;transform:scaleX(0.9200);transform-origin:center top;">T</div>
<div class="t" style="left:915.46px;top:167.66px;font-size:12px;line-height:12px;color:#000;transform:scaleX(0.9200);transform-origin:center top;">U</div>
<div class="t" style="left:952.80px;top:167.66px;font-size:12px;line-height:12px;color:#000;transform:scaleX(0.9200);transform-origin:center top;">V</div>
<div class="t" style="left:988.14px;top:167.66px;font-size:12px;line-height:12px;color:#000;transform:scaleX(0.9200);transform-origin:center top;">W</div>
<div class="t" style="left:1026.80px;top:167.66px;font-size:12px;line-height:12px;color:#000;transform:scaleX(0.9200);transform-origin:center top;">X</div>
<div class="t" style="left:1063.80px;top:167.66px;font-size:12px;line-height:12px;color:#000;transform:scaleX(0.9200);transform-origin:center top;">Y</div>
<div style="left:2px;top:204px;width:32px;height:1px;background:#8c8c8c"></div>
<div style="left:35px;top:204px;width:1059px;height:1px;background:#c7c7c7"></div>
<div class="t" style="left:14.66px;top:187.86px;font-size:12px;line-height:12px;color:#111;transform:scaleX(0.9500);transform-origin:center top;">1</div>
<div style="left:2px;top:227px;width:32px;height:1px;background:#8c8c8c"></div>
<div style="left:35px;top:227px;width:1059px;height:1px;background:#c7c7c7"></div>
<div class="t" style="left:14.66px;top:210.36px;font-size:12px;line-height:12px;color:#111;transform:scaleX(0.9500);transform-origin:center top;">2</div>
<div style="left:2px;top:246px;width:32px;height:1px;background:#8c8c8c"></div>
<div style="left:35px;top:246px;width:1059px;height:1px;background:#c7c7c7"></div>
<div class="t" style="left:14.66px;top:231.36px;font-size:12px;line-height:12px;color:#111;transform:scaleX(0.9500);transform-origin:center top;">3</div>
<div style="left:2px;top:264px;width:32px;height:1px;background:#8c8c8c"></div>
<div style="left:35px;top:264px;width:1059px;height:1px;background:#c7c7c7"></div>
<div class="t" style="left:14.66px;top:249.86px;font-size:12px;line-height:12px;color:#111;transform:scaleX(0.9500);transform-origin:center top;">4</div>
<div style="left:2px;top:284px;width:32px;height:1px;background:#8c8c8c"></div>
<div style="left:35px;top:284px;width:1059px;height:1px;background:#c7c7c7"></div>
<div class="t" style="left:14.66px;top:268.86px;font-size:12px;line-height:12px;color:#111;transform:scaleX(0.9500);transform-origin:center top;">5</div>
<div style="left:2px;top:304px;width:32px;height:1px;background:#8c8c8c"></div>
<div style="left:35px;top:304px;width:1059px;height:1px;background:#c7c7c7"></div>
<div class="t" style="left:14.66px;top:288.86px;font-size:12px;line-height:12px;color:#111;transform:scaleX(0.9500);transform-origin:center top;">6</div>
<div style="left:2px;top:320px;width:32px;height:1px;background:#8c8c8c"></div>
<div style="left:35px;top:320px;width:1059px;height:1px;background:#c7c7c7"></div>
<div class="t" style="left:14.66px;top:306.86px;font-size:12px;line-height:12px;color:#111;transform:scaleX(0.9500);transform-origin:center top;">7</div>
<div style="left:2px;top:336px;width:32px;height:1px;background:#8c8c8c"></div>
<div style="left:35px;top:336px;width:1059px;height:1px;background:#c7c7c7"></div>
<div class="t" style="left:14.66px;top:322.86px;font-size:12px;line-height:12px;color:#111;transform:scaleX(0.9500);transform-origin:center top;">8</div>
<div style="left:2px;top:352px;width:32px;height:1px;background:#8c8c8c"></div>
<div style="left:35px;top:352px;width:1059px;height:1px;background:#c7c7c7"></div>
<div class="t" style="left:14.66px;top:338.86px;font-size:12px;line-height:12px;color:#111;transform:scaleX(0.9500);transform-origin:center top;">9</div>
<div style="left:2px;top:368px;width:32px;height:1px;background:#8c8c8c"></div>
<div style="left:35px;top:368px;width:1059px;height:1px;background:#c7c7c7"></div>
<div class="t" style="left:11.33px;top:354.86px;font-size:12px;line-height:12px;color:#111;transform:scaleX(0.9500);transform-origin:center top;">10</div>
<div style="left:2px;top:384px;width:32px;height:1px;background:#8c8c8c"></div>
<div style="left:35px;top:384px;width:1059px;height:1px;background:#c7c7c7"></div>
<div class="t" style="left:11.77px;top:370.86px;font-size:12px;line-height:12px;color:#111;transform:scaleX(0.9500);transform-origin:center top;">11</div>
<div style="left:2px;top:400px;width:32px;height:1px;background:#8c8c8c"></div>
<div style="left:35px;top:400px;width:1059px;height:1px;background:#c7c7c7"></div>
<div class="t" style="left:11.33px;top:386.86px;font-size:12px;line-height:12px;color:#111;transform:scaleX(0.9500);transform-origin:center top;">12</div>
<div style="left:2px;top:416px;width:32px;height:1px;background:#8c8c8c"></div>
<div style="left:35px;top:416px;width:1059px;height:1px;background:#c7c7c7"></div>
<div class="t" style="left:11.33px;top:402.86px;font-size:12px;line-height:12px;color:#111;transform:scaleX(0.9500);transform-origin:center top;">13</div>
<div style="left:2px;top:432px;width:32px;height:1px;background:#8c8c8c"></div>
<div style="left:35px;top:432px;width:1059px;height:1px;background:#c7c7c7"></div>
<div class="t" style="left:11.33px;top:418.86px;font-size:12px;line-height:12px;color:#111;transform:scaleX(0.9500);transform-origin:center top;">14</div>
<div style="left:2px;top:448px;width:32px;height:1px;background:#8c8c8c"></div>
<div style="left:35px;top:448px;width:1059px;height:1px;background:#c7c7c7"></div>
<div class="t" style="left:11.33px;top:434.86px;font-size:12px;line-height:12px;color:#111;transform:scaleX(0.9500);transform-origin:center top;">15</div>
<div style="left:2px;top:464px;width:32px;height:1px;background:#8c8c8c"></div>
<div style="left:35px;top:464px;width:1059px;height:1px;background:#c7c7c7"></div>
<div class="t" style="left:11.33px;top:450.86px;font-size:12px;line-height:12px;color:#111;transform:scaleX(0.9500);transform-origin:center top;">16</div>
<div style="left:2px;top:480px;width:32px;height:1px;background:#8c8c8c"></div>
<div style="left:35px;top:480px;width:1059px;height:1px;background:#c7c7c7"></div>
<div class="t" style="left:11.33px;top:466.86px;font-size:12px;line-height:12px;color:#111;transform:scaleX(0.9500);transform-origin:center top;">17</div>
<div style="left:2px;top:496px;width:32px;height:1px;background:#8c8c8c"></div>
<div style="left:35px;top:496px;width:1059px;height:1px;background:#c7c7c7"></div>
<div class="t" style="left:11.33px;top:482.86px;font-size:12px;line-height:12px;color:#111;transform:scaleX(0.9500);transform-origin:center top;">18</div>
<div style="left:2px;top:512px;width:32px;height:1px;background:#8c8c8c"></div>
<div style="left:35px;top:512px;width:1059px;height:1px;background:#c7c7c7"></div>
<div class="t" style="left:11.33px;top:498.86px;font-size:12px;line-height:12px;color:#111;transform:scaleX(0.9500);transform-origin:center top;">19</div>
<div style="left:2px;top:528px;width:32px;height:1px;background:#8c8c8c"></div>
<div style="left:35px;top:528px;width:1059px;height:1px;background:#c7c7c7"></div>
<div class="t" style="left:11.33px;top:514.86px;font-size:12px;line-height:12px;color:#111;transform:scaleX(0.9500);transform-origin:center top;">20</div>
<div style="left:2px;top:544px;width:32px;height:1px;background:#8c8c8c"></div>
<div style="left:35px;top:544px;width:1059px;height:1px;background:#c7c7c7"></div>
<div class="t" style="left:11.33px;top:530.86px;font-size:12px;line-height:12px;color:#111;transform:scaleX(0.9500);transform-origin:center top;">21</div>
<div style="left:2px;top:560px;width:32px;height:1px;background:#8c8c8c"></div>
<div style="left:35px;top:560px;width:1059px;height:1px;background:#c7c7c7"></div>
<div class="t" style="left:11.33px;top:546.86px;font-size:12px;line-height:12px;color:#111;transform:scaleX(0.9500);transform-origin:center top;">22</div>
<div style="left:2px;top:576px;width:32px;height:1px;background:#8c8c8c"></div>
<div style="left:35px;top:576px;width:1059px;height:1px;background:#c7c7c7"></div>
<div class="t" style="left:11.33px;top:562.86px;font-size:12px;line-height:12px;color:#111;transform:scaleX(0.9500);transform-origin:center top;">23</div>
<div style="left:2px;top:592px;width:32px;height:1px;background:#8c8c8c"></div>
<div style="left:35px;top:592px;width:1059px;height:1px;background:#c7c7c7"></div>
<div class="t" style="left:11.33px;top:578.86px;font-size:12px;line-height:12px;color:#111;transform:scaleX(0.9500);transform-origin:center top;">24</div>
<div style="left:2px;top:608px;width:32px;height:1px;background:#8c8c8c"></div>
<div style="left:35px;top:608px;width:1059px;height:1px;background:#c7c7c7"></div>
<div class="t" style="left:11.33px;top:594.86px;font-size:12px;line-height:12px;color:#111;transform:scaleX(0.9500);transform-origin:center top;">25</div>
<div style="left:2px;top:624px;width:32px;height:1px;background:#8c8c8c"></div>
<div style="left:35px;top:624px;width:1059px;height:1px;background:#c7c7c7"></div>
<div class="t" style="left:11.33px;top:610.86px;font-size:12px;line-height:12px;color:#111;transform:scaleX(0.9500);transform-origin:center top;">26</div>
<div style="left:2px;top:640px;width:32px;height:1px;background:#8c8c8c"></div>
<div style="left:35px;top:640px;width:1059px;height:1px;background:#c7c7c7"></div>
<div class="t" style="left:11.33px;top:626.86px;font-size:12px;line-height:12px;color:#111;transform:scaleX(0.9500);transform-origin:center top;">27</div>
<div style="left:2px;top:656px;width:32px;height:1px;background:#8c8c8c"></div>
<div style="left:35px;top:656px;width:1059px;height:1px;background:#c7c7c7"></div>
<div class="t" style="left:11.33px;top:642.86px;font-size:12px;line-height:12px;color:#111;transform:scaleX(0.9500);transform-origin:center top;">28</div>
<div style="left:2px;top:672px;width:32px;height:1px;background:#8c8c8c"></div>
<div style="left:35px;top:672px;width:1059px;height:1px;background:#c7c7c7"></div>
<div class="t" style="left:11.33px;top:658.86px;font-size:12px;line-height:12px;color:#111;transform:scaleX(0.9500);transform-origin:center top;">29</div>
<div style="left:2px;top:688px;width:32px;height:1px;background:#8c8c8c"></div>
<div style="left:35px;top:688px;width:1059px;height:1px;background:#c7c7c7"></div>
<div class="t" style="left:11.33px;top:674.86px;font-size:12px;line-height:12px;color:#111;transform:scaleX(0.9500);transform-origin:center top;">30</div>
<div style="left:2px;top:704px;width:32px;height:1px;background:#8c8c8c"></div>
<div style="left:35px;top:704px;width:1059px;height:1px;background:#c7c7c7"></div>
<div class="t" style="left:11.33px;top:690.86px;font-size:12px;line-height:12px;color:#111;transform:scaleX(0.9500);transform-origin:center top;">31</div>
<div style="left:2px;top:720px;width:32px;height:1px;background:#8c8c8c"></div>
<div style="left:35px;top:720px;width:1059px;height:1px;background:#c7c7c7"></div>
<div class="t" style="left:11.33px;top:706.86px;font-size:12px;line-height:12px;color:#111;transform:scaleX(0.9500);transform-origin:center top;">32</div>
<div style="left:2px;top:736px;width:32px;height:1px;background:#8c8c8c"></div>
<div style="left:35px;top:736px;width:1059px;height:1px;background:#c7c7c7"></div>
<div class="t" style="left:11.33px;top:722.86px;font-size:12px;line-height:12px;color:#111;transform:scaleX(0.9500);transform-origin:center top;">33</div>
<div style="left:2px;top:752px;width:32px;height:1px;background:#8c8c8c"></div>
<div style="left:35px;top:752px;width:1059px;height:1px;background:#c7c7c7"></div>
<div class="t" style="left:11.33px;top:738.86px;font-size:12px;line-height:12px;color:#111;transform:scaleX(0.9500);transform-origin:center top;">34</div>
<div style="left:2px;top:768px;width:32px;height:1px;background:#8c8c8c"></div>
<div style="left:35px;top:768px;width:1059px;height:1px;background:#c7c7c7"></div>
<div class="t" style="left:11.33px;top:754.86px;font-size:12px;line-height:12px;color:#111;transform:scaleX(0.9500);transform-origin:center top;">35</div>
<div style="left:2px;top:784px;width:32px;height:1px;background:#8c8c8c"></div>
<div style="left:35px;top:784px;width:1059px;height:1px;background:#c7c7c7"></div>
<div class="t" style="left:11.33px;top:770.86px;font-size:12px;line-height:12px;color:#111;transform:scaleX(0.9500);transform-origin:center top;">36</div>
<div style="left:2px;top:800px;width:32px;height:1px;background:#8c8c8c"></div>
<div style="left:35px;top:800px;width:1059px;height:1px;background:#c7c7c7"></div>
<div class="t" style="left:11.33px;top:786.86px;font-size:12px;line-height:12px;color:#111;transform:scaleX(0.9500);transform-origin:center top;">37</div>
<div style="left:2px;top:816px;width:32px;height:1px;background:#8c8c8c"></div>
<div style="left:35px;top:816px;width:1059px;height:1px;background:#c7c7c7"></div>
<div class="t" style="left:11.33px;top:802.86px;font-size:12px;line-height:12px;color:#111;transform:scaleX(0.9500);transform-origin:center top;">38</div>
<div style="left:2px;top:832px;width:32px;height:1px;background:#8c8c8c"></div>
<div style="left:35px;top:832px;width:1059px;height:1px;background:#c7c7c7"></div>
<div class="t" style="left:11.33px;top:818.86px;font-size:12px;line-height:12px;color:#111;transform:scaleX(0.9500);transform-origin:center top;">39</div>
<div style="left:2px;top:848px;width:32px;height:1px;background:#8c8c8c"></div>
<div style="left:35px;top:848px;width:1059px;height:1px;background:#c7c7c7"></div>
<div class="t" style="left:11.33px;top:834.86px;font-size:12px;line-height:12px;color:#111;transform:scaleX(0.9500);transform-origin:center top;">40</div>
<div style="left:2px;top:864px;width:32px;height:1px;background:#8c8c8c"></div>
<div style="left:35px;top:864px;width:1059px;height:1px;background:#c7c7c7"></div>
<div class="t" style="left:11.33px;top:850.86px;font-size:12px;line-height:12px;color:#111;transform:scaleX(0.9500);transform-origin:center top;">41</div>
<div style="left:2px;top:880px;width:32px;height:1px;background:#8c8c8c"></div>
<div style="left:35px;top:880px;width:1059px;height:1px;background:#c7c7c7"></div>
<div class="t" style="left:11.33px;top:866.86px;font-size:12px;line-height:12px;color:#111;transform:scaleX(0.9500);transform-origin:center top;">42</div>
<div style="left:2px;top:896px;width:32px;height:1px;background:#8c8c8c"></div>
<div style="left:35px;top:896px;width:1059px;height:1px;background:#c7c7c7"></div>
<div class="t" style="left:11.33px;top:882.86px;font-size:12px;line-height:12px;color:#111;transform:scaleX(0.9500);transform-origin:center top;">43</div>
<div style="left:2px;top:912px;width:32px;height:1px;background:#8c8c8c"></div>
<div style="left:35px;top:912px;width:1059px;height:1px;background:#c7c7c7"></div>
<div class="t" style="left:11.33px;top:898.86px;font-size:12px;line-height:12px;color:#111;transform:scaleX(0.9500);transform-origin:center top;">44</div>
<div style="left:2px;top:928px;width:32px;height:1px;background:#8c8c8c"></div>
<div style="left:35px;top:928px;width:1059px;height:1px;background:#c7c7c7"></div>
<div style="left:2px;top:912px;width:33px;height:17px;background:#3399ff;border-top:1px solid #1a86ee;border-bottom:1px solid #1a86ee"></div>
<div style="left:2px;top:913px;width:15px;height:15px;background:#7fbdfd"></div>
<div class="t" style="left:11.33px;top:915.06px;font-size:12px;line-height:12px;color:#fff;transform:scaleX(1.0117);transform-origin:center top;">45</div>
<div style="left:2px;top:944px;width:32px;height:1px;background:#8c8c8c"></div>
<div style="left:35px;top:944px;width:1059px;height:1px;background:#c7c7c7"></div>
<div class="t" style="left:11.33px;top:930.86px;font-size:12px;line-height:12px;color:#111;transform:scaleX(0.9500);transform-origin:center top;">46</div>
<div style="left:2px;top:960px;width:32px;height:1px;background:#8c8c8c"></div>
<div style="left:35px;top:960px;width:1059px;height:1px;background:#c7c7c7"></div>
<div class="t" style="left:11.33px;top:946.86px;font-size:12px;line-height:12px;color:#111;transform:scaleX(0.9500);transform-origin:center top;">47</div>
<div style="left:2px;top:976px;width:32px;height:1px;background:#8c8c8c"></div>
<div style="left:35px;top:976px;width:1059px;height:1px;background:#c7c7c7"></div>
<div class="t" style="left:11.33px;top:962.86px;font-size:12px;line-height:12px;color:#111;transform:scaleX(0.9500);transform-origin:center top;">48</div>
<div class="t" style="left:36.30px;top:186.02px;font-size:15px;line-height:15px;font-weight:bold;color:#000;transform:scaleX(1.0565);transform-origin:left top;">Demonstration of adjustable-width, multiple-pass smoothing in a spreadsheet</div>
<div class="t" style="left:36.50px;top:209.39px;font-size:13.5px;line-height:13.5px;color:#000;transform:scaleX(1.0956);transform-origin:left top;">In this example, the original data in column A contain a delta function (single point spike) in row 24 and a step (beginning at row 38) to a noisy plateau.</div>
<div class="t" style="left:36.50px;top:231.46px;font-size:12px;line-height:12px;color:#000;transform:scaleX(1.0509);transform-origin:left top;">The smooth function is defined by the 17 red coefficients in row 5, columns I through Y.</div>
<div class="t" style="left:36.50px;top:249.46px;font-size:12px;line-height:12px;color:#000;transform:scaleX(1.0563);transform-origin:left top;">You can replace A8:A79 with your own data.</div>
<div class="t" style="left:717.00px;top:191.21px;font-size:11px;line-height:11px;color:#000;transform:scaleX(1.0650);transform-origin:left top;">Tom O'Haver (toh@umd.edu), 2013</div>
<div class="t" style="left:36.30px;top:268.21px;font-size:13px;line-height:13px;font-weight:bold;color:#000;transform:scaleX(1.0792);transform-origin:left top;">Original</div>
<div class="t" style="left:48.00px;top:288.51px;font-size:13px;line-height:13px;font-weight:bold;color:#000;transform:scaleX(1.0960);transform-origin:left top;">data</div>
<div class="t" style="left:168.30px;top:268.51px;font-size:13px;line-height:13px;font-weight:bold;color:#000;transform:scaleX(1.1183);transform-origin:left top;">Smoothed data</div>
<div class="t" style="left:302.10px;top:271.40px;font-size:11px;line-height:11px;color:#000;transform:scaleX(1.1005);transform-origin:left top;">Smooth coefficients  ----&gt;</div>
<div class="t" style="left:147.70px;top:291.20px;font-size:11px;line-height:11px;color:#000;transform:scaleX(1.0328);transform-origin:left top;">1 pass</div>
<div class="t" style="left:248.20px;top:291.20px;font-size:11px;line-height:11px;color:#000;transform:scaleX(1.0667);transform-origin:left top;">2 passes</div>
<div class="t" style="left:344.20px;top:291.20px;font-size:11px;line-height:11px;color:#000;transform:scaleX(1.0780);transform-origin:left top;">3 passes</div>
<div class="t" style="left:391.57px;top:308.20px;font-size:11px;line-height:11px;color:#000;transform:scaleX(0.9550);transform-origin:right top;">0</div>
<div class="t" style="left:83.58px;top:324.20px;font-size:11px;line-height:11px;color:#000;transform:scaleX(0.9550);transform-origin:right top;">0</div>
<div class="t" style="left:190.57px;top:324.20px;font-size:11px;line-height:11px;color:#000;transform:scaleX(0.9550);transform-origin:right top;">0</div>
<div class="t" style="left:292.57px;top:324.20px;font-size:11px;line-height:11px;color:#000;transform:scaleX(0.9550);transform-origin:right top;">0</div>
<div class="t" style="left:391.57px;top:324.20px;font-size:11px;line-height:11px;color:#000;transform:scaleX(0.9550);transform-origin:right top;">0</div>
<div class="t" style="left:83.58px;top:340.20px;font-size:11px;line-height:11px;color:#000;transform:scaleX(0.9550);transform-origin:right top;">0</div>
<div class="t" style="left:190.57px;top:340.20px;font-size:11px;line-height:11px;color:#000;transform:scaleX(0.9550);transform-origin:right top;">0</div>
<div class="t" style="left:292.57px;top:340.20px;font-size:11px;line-height:11px;color:#000;transform:scaleX(0.9550);transform-origin:right top;">0</div>
<div class="t" style="left:391.57px;top:340.20px;font-size:11px;line-height:11px;color:#000;transform:scaleX(0.9550);transform-origin:right top;">0</div>
<div class="t" style="left:83.58px;top:356.20px;font-size:11px;line-height:11px;color:#000;transform:scaleX(0.9550);transform-origin:right top;">0</div>
<div class="t" style="left:190.57px;top:356.20px;font-size:11px;line-height:11px;color:#000;transform:scaleX(0.9550);transform-origin:right top;">0</div>
<div class="t" style="left:292.57px;top:356.20px;font-size:11px;line-height:11px;color:#000;transform:scaleX(0.9550);transform-origin:right top;">0</div>
<div class="t" style="left:391.57px;top:356.20px;font-size:11px;line-height:11px;color:#000;transform:scaleX(0.9550);transform-origin:right top;">0</div>
<div class="t" style="left:83.58px;top:372.20px;font-size:11px;line-height:11px;color:#000;transform:scaleX(0.9550);transform-origin:right top;">0</div>
<div class="t" style="left:190.57px;top:372.20px;font-size:11px;line-height:11px;color:#000;transform:scaleX(0.9550);transform-origin:right top;">0</div>
<div class="t" style="left:292.57px;top:372.20px;font-size:11px;line-height:11px;color:#000;transform:scaleX(0.9550);transform-origin:right top;">0</div>
<div class="t" style="left:391.57px;top:372.20px;font-size:11px;line-height:11px;color:#000;transform:scaleX(0.9550);transform-origin:right top;">0</div>
<div class="t" style="left:83.58px;top:388.20px;font-size:11px;line-height:11px;color:#000;transform:scaleX(0.9550);transform-origin:right top;">0</div>
<div class="t" style="left:190.57px;top:388.20px;font-size:11px;line-height:11px;color:#000;transform:scaleX(0.9550);transform-origin:right top;">0</div>
<div class="t" style="left:292.57px;top:388.20px;font-size:11px;line-height:11px;color:#000;transform:scaleX(0.9550);transform-origin:right top;">0</div>
<div class="t" style="left:391.57px;top:388.20px;font-size:11px;line-height:11px;color:#000;transform:scaleX(0.9550);transform-origin:right top;">0</div>
<div class="t" style="left:83.58px;top:404.20px;font-size:11px;line-height:11px;color:#000;transform:scaleX(0.9550);transform-origin:right top;">0</div>
<div class="t" style="left:190.57px;top:404.20px;font-size:11px;line-height:11px;color:#000;transform:scaleX(0.9550);transform-origin:right top;">0</div>
<div class="t" style="left:292.57px;top:404.20px;font-size:11px;line-height:11px;color:#000;transform:scaleX(0.9550);transform-origin:right top;">0</div>
<div class="t" style="left:391.57px;top:404.20px;font-size:11px;line-height:11px;color:#000;transform:scaleX(0.9550);transform-origin:right top;">0</div>
<div class="t" style="left:83.58px;top:420.20px;font-size:11px;line-height:11px;color:#000;transform:scaleX(0.9550);transform-origin:right top;">0</div>
<div class="t" style="left:190.57px;top:420.20px;font-size:11px;line-height:11px;color:#000;transform:scaleX(0.9550);transform-origin:right top;">0</div>
<div class="t" style="left:292.57px;top:420.20px;font-size:11px;line-height:11px;color:#000;transform:scaleX(0.9550);transform-origin:right top;">0</div>
<div class="t" style="left:391.57px;top:420.20px;font-size:11px;line-height:11px;color:#000;transform:scaleX(0.9550);transform-origin:right top;">0</div>
<div class="t" style="left:83.58px;top:436.20px;font-size:11px;line-height:11px;color:#000;transform:scaleX(0.9550);transform-origin:right top;">0</div>
<div class="t" style="left:190.57px;top:436.20px;font-size:11px;line-height:11px;color:#000;transform:scaleX(0.9550);transform-origin:right top;">0</div>
<div class="t" style="left:292.57px;top:436.20px;font-size:11px;line-height:11px;color:#000;transform:scaleX(0.9550);transform-origin:right top;">0</div>
<div class="t" style="left:391.57px;top:436.20px;font-size:11px;line-height:11px;color:#000;transform:scaleX(0.9550);transform-origin:right top;">0</div>
<div class="t" style="left:83.58px;top:452.20px;font-size:11px;line-height:11px;color:#000;transform:scaleX(0.9550);transform-origin:right top;">0</div>
<div class="t" style="left:190.57px;top:452.20px;font-size:11px;line-height:11px;color:#000;transform:scaleX(0.9550);transform-origin:right top;">0</div>
<div class="t" style="left:292.57px;top:452.20px;font-size:11px;line-height:11px;color:#000;transform:scaleX(0.9550);transform-origin:right top;">0</div>
<div class="t" style="left:391.57px;top:452.20px;font-size:11px;line-height:11px;color:#000;transform:scaleX(0.9550);transform-origin:right top;">0</div>
<div class="t" style="left:83.58px;top:468.20px;font-size:11px;line-height:11px;color:#000;transform:scaleX(0.9550);transform-origin:right top;">0</div>
<div class="t" style="left:190.57px;top:468.20px;font-size:11px;line-height:11px;color:#000;transform:scaleX(0.9550);transform-origin:right top;">0</div>
<div class="t" style="left:292.57px;top:468.20px;font-size:11px;line-height:11px;color:#000;transform:scaleX(0.9550);transform-origin:right top;">0</div>
<div class="t" style="left:345.64px;top:468.20px;font-size:11px;line-height:11px;color:#000;transform:scaleX(0.9550);transform-origin:right top;">0.0512695</div>
<div class="t" style="left:83.58px;top:484.20px;font-size:11px;line-height:11px;color:#000;transform:scaleX(0.9550);transform-origin:right top;">0</div>
<div class="t" style="left:190.57px;top:484.20px;font-size:11px;line-height:11px;color:#000;transform:scaleX(0.9550);transform-origin:right top;">0</div>
<div class="t" style="left:246.64px;top:484.20px;font-size:11px;line-height:11px;color:#000;transform:scaleX(0.9550);transform-origin:right top;">0.0390625</div>
<div class="t" style="left:345.64px;top:484.20px;font-size:11px;line-height:11px;color:#000;transform:scaleX(0.9550);transform-origin:right top;">0.1367188</div>
<div class="t" style="left:83.58px;top:500.20px;font-size:11px;line-height:11px;color:#000;transform:scaleX(0.9550);transform-origin:right top;">0</div>
<div class="t" style="left:190.57px;top:500.20px;font-size:11px;line-height:11px;color:#000;transform:scaleX(0.9550);transform-origin:right top;">0</div>
<div class="t" style="left:258.89px;top:500.20px;font-size:11px;line-height:11px;color:#000;transform:scaleX(0.9550);transform-origin:right top;">0.15625</div>
<div class="t" style="left:345.64px;top:500.20px;font-size:11px;line-height:11px;color:#000;transform:scaleX(0.9550);transform-origin:right top;">0.2929688</div>
<div class="t" style="left:83.58px;top:516.21px;font-size:11px;line-height:11px;color:#000;transform:scaleX(0.9550);transform-origin:right top;">0</div>
<div class="t" style="left:190.57px;top:516.21px;font-size:11px;line-height:11px;color:#000;transform:scaleX(0.9550);transform-origin:right top;">0</div>
<div class="t" style="left:252.76px;top:516.21px;font-size:11px;line-height:11px;color:#000;transform:scaleX(0.9550);transform-origin:right top;">0.390625</div>
<div class="t" style="left:345.64px;top:516.21px;font-size:11px;line-height:11px;color:#000;transform:scaleX(0.9550);transform-origin:right top;">0.5273438</div>
<div class="t" style="left:83.58px;top:532.21px;font-size:11px;line-height:11px;color:#000;transform:scaleX(0.9550);transform-origin:right top;">0</div>
<div class="t" style="left:169.14px;top:532.21px;font-size:11px;line-height:11px;color:#000;transform:scaleX(0.9550);transform-origin:right top;">0.625</div>
<div class="t" style="left:258.89px;top:532.21px;font-size:11px;line-height:11px;color:#000;transform:scaleX(0.9550);transform-origin:right top;">0.78125</div>
<div class="t" style="left:345.64px;top:532.21px;font-size:11px;line-height:11px;color:#000;transform:scaleX(0.9550);transform-origin:right top;">0.8203125</div>
<div class="t" style="left:83.58px;top:548.21px;font-size:11px;line-height:11px;color:#000;transform:scaleX(0.9550);transform-origin:right top;">0</div>
<div class="t" style="left:175.26px;top:548.21px;font-size:11px;line-height:11px;color:#000;transform:scaleX(0.9550);transform-origin:right top;">1.25</div>
<div class="t" style="left:246.64px;top:548.21px;font-size:11px;line-height:11px;color:#000;transform:scaleX(0.9550);transform-origin:right top;">1.2109375</div>
<div class="t" style="left:346.45px;top:548.21px;font-size:11px;line-height:11px;color:#000;transform:scaleX(0.9550);transform-origin:right top;">1.1132813</div>
<div class="t" style="left:83.58px;top:564.21px;font-size:11px;line-height:11px;color:#000;transform:scaleX(0.9550);transform-origin:right top;">0</div>
<div class="t" style="left:169.14px;top:564.21px;font-size:11px;line-height:11px;color:#000;transform:scaleX(0.9550);transform-origin:right top;">1.875</div>
<div class="t" style="left:265.01px;top:564.21px;font-size:11px;line-height:11px;color:#000;transform:scaleX(0.9550);transform-origin:right top;">1.5625</div>
<div class="t" style="left:345.64px;top:564.21px;font-size:11px;line-height:11px;color:#000;transform:scaleX(0.9550);transform-origin:right top;">1.3330078</div>
<div class="t" style="left:77.45px;top:580.21px;font-size:11px;line-height:11px;color:#000;transform:scaleX(0.9550);transform-origin:right top;">10</div>
<div class="t" style="left:181.39px;top:580.21px;font-size:11px;line-height:11px;color:#000;transform:scaleX(0.9550);transform-origin:right top;">2.5</div>
<div class="t" style="left:258.89px;top:580.21px;font-size:11px;line-height:11px;color:#000;transform:scaleX(0.9550);transform-origin:right top;">1.71875</div>
<div class="t" style="left:345.64px;top:580.21px;font-size:11px;line-height:11px;color:#000;transform:scaleX(0.9550);transform-origin:right top;">1.4160156</div>
<div class="t" style="left:83.58px;top:596.21px;font-size:11px;line-height:11px;color:#000;transform:scaleX(0.9550);transform-origin:right top;">0</div>
<div class="t" style="left:169.14px;top:596.21px;font-size:11px;line-height:11px;color:#000;transform:scaleX(0.9550);transform-origin:right top;">1.875</div>
<div class="t" style="left:265.01px;top:596.21px;font-size:11px;line-height:11px;color:#000;transform:scaleX(0.9550);transform-origin:right top;">1.5625</div>
<div class="t" style="left:345.64px;top:596.21px;font-size:11px;line-height:11px;color:#000;transform:scaleX(0.9550);transform-origin:right top;">1.3330078</div>
<div class="t" style="left:83.58px;top:612.21px;font-size:11px;line-height:11px;color:#000;transform:scaleX(0.9550);transform-origin:right top;">0</div>
<div class="t" style="left:175.26px;top:612.21px;font-size:11px;line-height:11px;color:#000;transform:scaleX(0.9550);transform-origin:right top;">1.25</div>
<div class="t" style="left:246.64px;top:612.21px;font-size:11px;line-height:11px;color:#000;transform:scaleX(0.9550);transform-origin:right top;">1.2109375</div>
<div class="t" style="left:346.45px;top:612.21px;font-size:11px;line-height:11px;color:#000;transform:scaleX(0.9550);transform-origin:right top;">1.1132813</div>
<div class="t" style="left:83.58px;top:628.21px;font-size:11px;line-height:11px;color:#000;transform:scaleX(0.9550);transform-origin:right top;">0</div>
<div class="t" style="left:169.14px;top:628.21px;font-size:11px;line-height:11px;color:#000;transform:scaleX(0.9550);transform-origin:right top;">0.625</div>
<div class="t" style="left:258.89px;top:628.21px;font-size:11px;line-height:11px;color:#000;transform:scaleX(0.9550);transform-origin:right top;">0.78125</div>
<div class="t" style="left:345.64px;top:628.21px;font-size:11px;line-height:11px;color:#000;transform:scaleX(0.9550);transform-origin:right top;">0.8203125</div>
<div class="t" style="left:83.58px;top:644.21px;font-size:11px;line-height:11px;color:#000;transform:scaleX(0.9550);transform-origin:right top;">0</div>
<div class="t" style="left:190.57px;top:644.21px;font-size:11px;line-height:11px;color:#000;transform:scaleX(0.9550);transform-origin:right top;">0</div>
<div class="t" style="left:252.76px;top:644.21px;font-size:11px;line-height:11px;color:#000;transform:scaleX(0.9550);transform-origin:right top;">0.390625</div>
<div class="t" style="left:345.64px;top:644.21px;font-size:11px;line-height:11px;color:#000;transform:scaleX(0.9550);transform-origin:right top;">0.5273438</div>
<div class="t" style="left:83.58px;top:660.21px;font-size:11px;line-height:11px;color:#000;transform:scaleX(0.9550);transform-origin:right top;">0</div>
<div class="t" style="left:190.57px;top:660.21px;font-size:11px;line-height:11px;color:#000;transform:scaleX(0.9550);transform-origin:right top;">0</div>
<div class="t" style="left:258.89px;top:660.21px;font-size:11px;line-height:11px;color:#000;transform:scaleX(0.9550);transform-origin:right top;">0.15625</div>
<div class="t" style="left:345.64px;top:660.21px;font-size:11px;line-height:11px;color:#000;transform:scaleX(0.9550);transform-origin:right top;">0.2944336</div>
<div class="t" style="left:83.58px;top:676.21px;font-size:11px;line-height:11px;color:#000;transform:scaleX(0.9550);transform-origin:right top;">0</div>
<div class="t" style="left:190.57px;top:676.21px;font-size:11px;line-height:11px;color:#000;transform:scaleX(0.9550);transform-origin:right top;">0</div>
<div class="t" style="left:246.64px;top:676.21px;font-size:11px;line-height:11px;color:#000;transform:scaleX(0.9550);transform-origin:right top;">0.0390625</div>
<div class="t" style="left:345.64px;top:676.21px;font-size:11px;line-height:11px;color:#000;transform:scaleX(0.9550);transform-origin:right top;">0.1469727</div>
<div class="t" style="left:83.58px;top:692.21px;font-size:11px;line-height:11px;color:#000;transform:scaleX(0.9550);transform-origin:right top;">0</div>
<div class="t" style="left:190.57px;top:692.21px;font-size:11px;line-height:11px;color:#000;transform:scaleX(0.9550);transform-origin:right top;">0</div>
<div class="t" style="left:292.57px;top:692.21px;font-size:11px;line-height:11px;color:#000;transform:scaleX(0.9550);transform-origin:right top;">0</div>
<div class="t" style="left:351.76px;top:692.21px;font-size:11px;line-height:11px;color:#000;transform:scaleX(0.9550);transform-origin:right top;">0.092041</div>
<div class="t" style="left:83.58px;top:708.21px;font-size:11px;line-height:11px;color:#000;transform:scaleX(0.9550);transform-origin:right top;">0</div>
<div class="t" style="left:190.57px;top:708.21px;font-size:11px;line-height:11px;color:#000;transform:scaleX(0.9550);transform-origin:right top;">0</div>
<div class="t" style="left:246.64px;top:708.21px;font-size:11px;line-height:11px;color:#000;transform:scaleX(0.9550);transform-origin:right top;">0.0234375</div>
<div class="t" style="left:345.64px;top:708.21px;font-size:11px;line-height:11px;color:#000;transform:scaleX(0.9550);transform-origin:right top;">0.1364746</div>
<div class="t" style="left:83.58px;top:724.21px;font-size:11px;line-height:11px;color:#000;transform:scaleX(0.9550);transform-origin:right top;">0</div>
<div class="t" style="left:190.57px;top:724.21px;font-size:11px;line-height:11px;color:#000;transform:scaleX(0.9550);transform-origin:right top;">0</div>
<div class="t" style="left:247.45px;top:724.21px;font-size:11px;line-height:11px;color:#000;transform:scaleX(0.9550);transform-origin:right top;">0.1171875</div>
<div class="t" style="left:345.64px;top:724.21px;font-size:11px;line-height:11px;color:#000;transform:scaleX(0.9550);transform-origin:right top;">0.2976074</div>
<div class="t" style="left:83.58px;top:740.21px;font-size:11px;line-height:11px;color:#000;transform:scaleX(0.9550);transform-origin:right top;">0</div>
<div class="t" style="left:190.57px;top:740.21px;font-size:11px;line-height:11px;color:#000;transform:scaleX(0.9550);transform-origin:right top;">0</div>
<div class="t" style="left:246.64px;top:740.21px;font-size:11px;line-height:11px;color:#000;transform:scaleX(0.9550);transform-origin:right top;">0.3476563</div>
<div class="t" style="left:345.64px;top:740.21px;font-size:11px;line-height:11px;color:#000;transform:scaleX(0.9550);transform-origin:right top;">0.6064453</div>
<div class="t" style="left:83.58px;top:756.21px;font-size:11px;line-height:11px;color:#000;transform:scaleX(0.9550);transform-origin:right top;">0</div>
<div class="t" style="left:169.14px;top:756.21px;font-size:11px;line-height:11px;color:#000;transform:scaleX(0.9550);transform-origin:right top;">0.375</div>
<div class="t" style="left:246.64px;top:756.21px;font-size:11px;line-height:11px;color:#000;transform:scaleX(0.9550);transform-origin:right top;">0.8085938</div>
<div class="t" style="left:351.76px;top:756.21px;font-size:11px;line-height:11px;color:#000;transform:scaleX(0.9550);transform-origin:right top;">1.090332</div>
<div class="t" style="left:83.58px;top:772.21px;font-size:11px;line-height:11px;color:#000;transform:scaleX(0.9550);transform-origin:right top;">0</div>
<div class="t" style="left:169.14px;top:772.21px;font-size:11px;line-height:11px;color:#000;transform:scaleX(0.9550);transform-origin:right top;">1.125</div>
<div class="t" style="left:246.64px;top:772.21px;font-size:11px;line-height:11px;color:#000;transform:scaleX(0.9550);transform-origin:right top;">1.5234375</div>
<div class="t" style="left:351.76px;top:772.21px;font-size:11px;line-height:11px;color:#000;transform:scaleX(0.9550);transform-origin:right top;">1.746582</div>
<div class="t" style="left:83.58px;top:788.21px;font-size:11px;line-height:11px;color:#000;transform:scaleX(0.9550);transform-origin:right top;">0</div>
<div class="t" style="left:163.01px;top:788.21px;font-size:11px;line-height:11px;color:#000;transform:scaleX(0.9550);transform-origin:right top;">2.1875</div>
<div class="t" style="left:246.64px;top:788.21px;font-size:11px;line-height:11px;color:#000;transform:scaleX(0.9550);transform-origin:right top;">2.4414063</div>
<div class="t" style="left:345.64px;top:788.21px;font-size:11px;line-height:11px;color:#000;transform:scaleX(0.9550);transform-origin:right top;">2.5310059</div>
<div class="t" style="left:83.58px;top:804.21px;font-size:11px;line-height:11px;color:#000;transform:scaleX(0.9550);transform-origin:right top;">6</div>
<div class="t" style="left:163.01px;top:804.21px;font-size:11px;line-height:11px;color:#000;transform:scaleX(0.9550);transform-origin:right top;">3.6875</div>
<div class="t" style="left:246.64px;top:804.21px;font-size:11px;line-height:11px;color:#000;transform:scaleX(0.9550);transform-origin:right top;">3.4570313</div>
<div class="t" style="left:345.64px;top:804.21px;font-size:11px;line-height:11px;color:#000;transform:scaleX(0.9550);transform-origin:right top;">3.3625488</div>
<div class="t" style="left:83.58px;top:820.21px;font-size:11px;line-height:11px;color:#000;transform:scaleX(0.9550);transform-origin:right top;">6</div>
<div class="t" style="left:163.01px;top:820.21px;font-size:11px;line-height:11px;color:#000;transform:scaleX(0.9550);transform-origin:right top;">4.8125</div>
<div class="t" style="left:271.14px;top:820.21px;font-size:11px;line-height:11px;color:#000;transform:scaleX(0.9550);transform-origin:right top;">4.375</div>
<div class="t" style="left:345.64px;top:820.21px;font-size:11px;line-height:11px;color:#000;transform:scaleX(0.9550);transform-origin:right top;">4.1413574</div>
<div class="t" style="left:83.58px;top:836.21px;font-size:11px;line-height:11px;color:#000;transform:scaleX(0.9550);transform-origin:right top;">5</div>
<div class="t" style="left:181.39px;top:836.21px;font-size:11px;line-height:11px;color:#000;transform:scaleX(0.9550);transform-origin:right top;">5.5</div>
<div class="t" style="left:246.64px;top:836.21px;font-size:11px;line-height:11px;color:#000;transform:scaleX(0.9550);transform-origin:right top;">5.0742188</div>
<div class="t" style="left:351.76px;top:836.21px;font-size:11px;line-height:11px;color:#000;transform:scaleX(0.9550);transform-origin:right top;">4.786377</div>
<div class="t" style="left:83.58px;top:852.21px;font-size:11px;line-height:11px;color:#000;transform:scaleX(0.9550);transform-origin:right top;">7</div>
<div class="t" style="left:163.01px;top:852.21px;font-size:11px;line-height:11px;color:#000;transform:scaleX(0.9550);transform-origin:right top;">5.9375</div>
<div class="t" style="left:246.64px;top:852.21px;font-size:11px;line-height:11px;color:#000;transform:scaleX(0.9550);transform-origin:right top;">5.5195313</div>
<div class="t" style="left:345.64px;top:852.21px;font-size:11px;line-height:11px;color:#000;transform:scaleX(0.9550);transform-origin:right top;">5.2570801</div>
<div class="t" style="left:83.58px;top:868.21px;font-size:11px;line-height:11px;color:#000;transform:scaleX(0.9550);transform-origin:right top;">6</div>
<div class="t" style="left:163.01px;top:868.21px;font-size:11px;line-height:11px;color:#000;transform:scaleX(0.9550);transform-origin:right top;">5.8125</div>
<div class="t" style="left:246.64px;top:868.21px;font-size:11px;line-height:11px;color:#000;transform:scaleX(0.9550);transform-origin:right top;">5.7226563</div>
<div class="t" style="left:345.64px;top:868.21px;font-size:11px;line-height:11px;color:#000;transform:scaleX(0.9550);transform-origin:right top;">5.5568848</div>
<div class="t" style="left:83.58px;top:884.21px;font-size:11px;line-height:11px;color:#000;transform:scaleX(0.9550);transform-origin:right top;">5</div>
<div class="t" style="left:175.26px;top:884.21px;font-size:11px;line-height:11px;color:#000;transform:scaleX(0.9550);transform-origin:right top;">5.75</div>
<div class="t" style="left:246.64px;top:884.21px;font-size:11px;line-height:11px;color:#000;transform:scaleX(0.9550);transform-origin:right top;">5.8007813</div>
<div class="t" style="left:345.64px;top:884.21px;font-size:11px;line-height:11px;color:#000;transform:scaleX(0.9550);transform-origin:right top;">5.7265625</div>
<div class="t" style="left:83.58px;top:900.21px;font-size:11px;line-height:11px;color:#000;transform:scaleX(0.9550);transform-origin:right top;">6</div>
<div class="t" style="left:163.01px;top:900.21px;font-size:11px;line-height:11px;color:#000;transform:scaleX(0.9550);transform-origin:right top;">5.8125</div>
<div class="t" style="left:246.64px;top:900.21px;font-size:11px;line-height:11px;color:#000;transform:scaleX(0.9550);transform-origin:right top;">5.8359375</div>
<div class="t" style="left:345.64px;top:900.21px;font-size:11px;line-height:11px;color:#000;transform:scaleX(0.9550);transform-origin:right top;">5.8156738</div>
<div class="t" style="left:83.58px;top:916.21px;font-size:11px;line-height:11px;color:#000;transform:scaleX(0.9550);transform-origin:right top;">5</div>
<div class="t" style="left:163.01px;top:916.21px;font-size:11px;line-height:11px;color:#000;transform:scaleX(0.9550);transform-origin:right top;">5.8125</div>
<div class="t" style="left:246.64px;top:916.21px;font-size:11px;line-height:11px;color:#000;transform:scaleX(0.9550);transform-origin:right top;">5.8632813</div>
<div class="t" style="left:345.64px;top:916.21px;font-size:11px;line-height:11px;color:#000;transform:scaleX(0.9550);transform-origin:right top;">5.8637695</div>
<div class="t" style="left:83.58px;top:932.21px;font-size:11px;line-height:11px;color:#000;transform:scaleX(0.9550);transform-origin:right top;">7</div>
<div class="t" style="left:163.01px;top:932.21px;font-size:11px;line-height:11px;color:#000;transform:scaleX(0.9550);transform-origin:right top;">5.9375</div>
<div class="t" style="left:258.89px;top:932.21px;font-size:11px;line-height:11px;color:#000;transform:scaleX(0.9550);transform-origin:right top;">5.90625</div>
<div class="t" style="left:345.64px;top:932.21px;font-size:11px;line-height:11px;color:#000;transform:scaleX(0.9550);transform-origin:right top;">5.8935547</div>
<div class="t" style="left:83.58px;top:948.21px;font-size:11px;line-height:11px;color:#000;transform:scaleX(0.9550);transform-origin:right top;">6</div>
<div class="t" style="left:190.57px;top:948.21px;font-size:11px;line-height:11px;color:#000;transform:scaleX(0.9550);transform-origin:right top;">6</div>
<div class="t" style="left:265.01px;top:948.21px;font-size:11px;line-height:11px;color:#000;transform:scaleX(0.9550);transform-origin:right top;">5.9375</div>
<div class="t" style="left:345.64px;top:948.21px;font-size:11px;line-height:11px;color:#000;transform:scaleX(0.9550);transform-origin:right top;">5.9094238</div>
<div class="t" style="left:83.58px;top:964.21px;font-size:11px;line-height:11px;color:#000;transform:scaleX(0.9550);transform-origin:right top;">6</div>
<div class="t" style="left:190.57px;top:964.21px;font-size:11px;line-height:11px;color:#000;transform:scaleX(0.9550);transform-origin:right top;">6</div>
<div class="t" style="left:246.64px;top:964.21px;font-size:11px;line-height:11px;color:#000;transform:scaleX(0.9550);transform-origin:right top;">5.9414063</div>
<div class="t" style="left:351.76px;top:964.21px;font-size:11px;line-height:11px;color:#000;transform:scaleX(0.9550);transform-origin:right top;">5.909668</div>
<div class="t" style="left:83.58px;top:980.21px;font-size:11px;line-height:11px;color:#000;transform:scaleX(0.9550);transform-origin:right top;">5</div>
<div class="t" style="left:163.01px;top:980.21px;font-size:11px;line-height:11px;color:#000;transform:scaleX(0.9550);transform-origin:right top;">5.9375</div>
<div class="t" style="left:246.64px;top:980.21px;font-size:11px;line-height:11px;color:#000;transform:scaleX(0.9550);transform-origin:right top;">5.9140625</div>
<div class="t" style="left:345.64px;top:980.21px;font-size:11px;line-height:11px;color:#000;transform:scaleX(0.9550);transform-origin:right top;">5.8942871</div>
<div style="left:457px;top:246px;width:628px;height:18px;background:#e3e3e3"></div>
<div class="t" style="left:470.33px;top:251.53px;font-size:10.5px;line-height:10.5px;font-weight:bold;color:#000;transform:scaleX(0.9500);transform-origin:center top;">-8</div>
<div class="t" style="left:485.03px;top:269.86px;font-size:12px;line-height:12px;font-weight:bold;color:#f26a1b;transform:scaleX(0.9000);transform-origin:right top;">0</div>
<div style="left:493px;top:246px;width:1px;height:38px;background:#c4c4c4"></div>
<div class="t" style="left:507.33px;top:251.53px;font-size:10.5px;line-height:10.5px;font-weight:bold;color:#000;transform:scaleX(0.9500);transform-origin:center top;">-7</div>
<div class="t" style="left:522.03px;top:269.86px;font-size:12px;line-height:12px;font-weight:bold;color:#f26a1b;transform:scaleX(0.9000);transform-origin:right top;">0</div>
<div style="left:530px;top:246px;width:1px;height:38px;background:#c4c4c4"></div>
<div class="t" style="left:544.33px;top:251.53px;font-size:10.5px;line-height:10.5px;font-weight:bold;color:#000;transform:scaleX(0.9500);transform-origin:center top;">-6</div>
<div class="t" style="left:559.03px;top:269.86px;font-size:12px;line-height:12px;font-weight:bold;color:#f26a1b;transform:scaleX(0.9000);transform-origin:right top;">0</div>
<div style="left:567px;top:246px;width:1px;height:38px;background:#c4c4c4"></div>
<div class="t" style="left:581.33px;top:251.53px;font-size:10.5px;line-height:10.5px;font-weight:bold;color:#000;transform:scaleX(0.9500);transform-origin:center top;">-5</div>
<div class="t" style="left:596.03px;top:269.86px;font-size:12px;line-height:12px;font-weight:bold;color:#f26a1b;transform:scaleX(0.9000);transform-origin:right top;">0</div>
<div style="left:604px;top:246px;width:1px;height:38px;background:#c4c4c4"></div>
<div class="t" style="left:618.33px;top:251.53px;font-size:10.5px;line-height:10.5px;font-weight:bold;color:#000;transform:scaleX(0.9500);transform-origin:center top;">-4</div>
<div class="t" style="left:633.03px;top:269.86px;font-size:12px;line-height:12px;font-weight:bold;color:#f26a1b;transform:scaleX(0.9000);transform-origin:right top;">0</div>
<div style="left:641px;top:246px;width:1px;height:38px;background:#c4c4c4"></div>
<div class="t" style="left:655.33px;top:251.53px;font-size:10.5px;line-height:10.5px;font-weight:bold;color:#000;transform:scaleX(0.9500);transform-origin:center top;">-3</div>
<div class="t" style="left:670.03px;top:269.86px;font-size:12px;line-height:12px;font-weight:bold;color:#f26a1b;transform:scaleX(0.9000);transform-origin:right top;">1</div>
<div style="left:678px;top:246px;width:1px;height:38px;background:#c4c4c4"></div>
<div class="t" style="left:692.33px;top:251.53px;font-size:10.5px;line-height:10.5px;font-weight:bold;color:#000;transform:scaleX(0.9500);transform-origin:center top;">-2</div>
<div class="t" style="left:707.03px;top:269.86px;font-size:12px;line-height:12px;font-weight:bold;color:#f26a1b;transform:scaleX(0.9000);transform-origin:right top;">2</div>
<div style="left:715px;top:246px;width:1px;height:38px;background:#c4c4c4"></div>
<div class="t" style="left:729.33px;top:251.53px;font-size:10.5px;line-height:10.5px;font-weight:bold;color:#000;transform:scaleX(0.9500);transform-origin:center top;">-1</div>
<div class="t" style="left:744.03px;top:269.86px;font-size:12px;line-height:12px;font-weight:bold;color:#f26a1b;transform:scaleX(0.9000);transform-origin:right top;">3</div>
<div style="left:752px;top:246px;width:1px;height:38px;background:#c4c4c4"></div>
<div class="t" style="left:768.08px;top:251.53px;font-size:10.5px;line-height:10.5px;font-weight:bold;color:#000;transform:scaleX(0.9500);transform-origin:center top;">0</div>
<div class="t" style="left:781.03px;top:269.86px;font-size:12px;line-height:12px;font-weight:bold;color:#f26a1b;transform:scaleX(0.9000);transform-origin:right top;">4</div>
<div style="left:789px;top:246px;width:1px;height:38px;background:#c4c4c4"></div>
<div class="t" style="left:805.08px;top:251.53px;font-size:10.5px;line-height:10.5px;font-weight:bold;color:#000;transform:scaleX(0.9500);transform-origin:center top;">1</div>
<div class="t" style="left:818.03px;top:269.86px;font-size:12px;line-height:12px;font-weight:bold;color:#f26a1b;transform:scaleX(0.9000);transform-origin:right top;">3</div>
<div style="left:826px;top:246px;width:1px;height:38px;background:#c4c4c4"></div>
<div class="t" style="left:842.08px;top:251.53px;font-size:10.5px;line-height:10.5px;font-weight:bold;color:#000;transform:scaleX(0.9500);transform-origin:center top;">2</div>
<div class="t" style="left:855.03px;top:269.86px;font-size:12px;line-height:12px;font-weight:bold;color:#f26a1b;transform:scaleX(0.9000);transform-origin:right top;">2</div>
<div style="left:863px;top:246px;width:1px;height:38px;background:#c4c4c4"></div>
<div class="t" style="left:879.08px;top:251.53px;font-size:10.5px;line-height:10.5px;font-weight:bold;color:#000;transform:scaleX(0.9500);transform-origin:center top;">3</div>
<div class="t" style="left:892.03px;top:269.86px;font-size:12px;line-height:12px;font-weight:bold;color:#f26a1b;transform:scaleX(0.9000);transform-origin:right top;">1</div>
<div style="left:900px;top:246px;width:1px;height:38px;background:#c4c4c4"></div>
<div class="t" style="left:916.08px;top:251.53px;font-size:10.5px;line-height:10.5px;font-weight:bold;color:#000;transform:scaleX(0.9500);transform-origin:center top;">4</div>
<div class="t" style="left:929.03px;top:269.86px;font-size:12px;line-height:12px;font-weight:bold;color:#f26a1b;transform:scaleX(0.9000);transform-origin:right top;">0</div>
<div style="left:937px;top:246px;width:1px;height:38px;background:#c4c4c4"></div>
<div class="t" style="left:953.08px;top:251.53px;font-size:10.5px;line-height:10.5px;font-weight:bold;color:#000;transform:scaleX(0.9500);transform-origin:center top;">5</div>
<div class="t" style="left:966.03px;top:269.86px;font-size:12px;line-height:12px;font-weight:bold;color:#f26a1b;transform:scaleX(0.9000);transform-origin:right top;">0</div>
<div style="left:974px;top:246px;width:1px;height:38px;background:#c4c4c4"></div>
<div class="t" style="left:990.08px;top:251.53px;font-size:10.5px;line-height:10.5px;font-weight:bold;color:#000;transform:scaleX(0.9500);transform-origin:center top;">6</div>
<div class="t" style="left:1003.03px;top:269.86px;font-size:12px;line-height:12px;font-weight:bold;color:#f26a1b;transform:scaleX(0.9000);transform-origin:right top;">0</div>
<div style="left:1011px;top:246px;width:1px;height:38px;background:#c4c4c4"></div>
<div class="t" style="left:1027.08px;top:251.53px;font-size:10.5px;line-height:10.5px;font-weight:bold;color:#000;transform:scaleX(0.9500);transform-origin:center top;">7</div>
<div class="t" style="left:1040.03px;top:269.86px;font-size:12px;line-height:12px;font-weight:bold;color:#f26a1b;transform:scaleX(0.9000);transform-origin:right top;">0</div>
<div style="left:1048px;top:246px;width:1px;height:38px;background:#c4c4c4"></div>
<div class="t" style="left:1064.08px;top:251.53px;font-size:10.5px;line-height:10.5px;font-weight:bold;color:#000;transform:scaleX(0.9500);transform-origin:center top;">8</div>
<div class="t" style="left:1077.03px;top:269.86px;font-size:12px;line-height:12px;font-weight:bold;color:#f26a1b;transform:scaleX(0.9000);transform-origin:right top;">0</div>
<div style="left:456px;top:264px;width:629px;height:1px;background:#c4c4c4"></div>
<div style="left:456px;top:245px;width:630px;height:40px;border:1px solid #000;border-top-width:1.5px;border-bottom-width:1.5px;background:transparent"></div>
<svg style="left:0;top:0;overflow:hidden" width="1164" height="971" viewBox="0 0 1164 971"><rect x="469" y="291" width="427" height="279" fill="#fff"/><rect x="469" y="291" width="2" height="279" fill="#8fdfdf"/><rect x="469" y="291" width="427" height="2" fill="#8fdfdf"/><rect x="895" y="291" width="1" height="279" fill="#33c9c9"/><text x="700" y="327.8" font-size="14.5" text-anchor="middle" fill="#000" font-family="Liberation Sans" textLength="78.5" lengthAdjust="spacingAndGlyphs">Original data</text><line x1="492.4" y1="534.30" x2="879.4" y2="534.30" stroke="#bdbdbd" stroke-width="1.2"/><text x="488.9" y="538.30" font-size="11" text-anchor="end" fill="#000" font-family="Liberation Sans">0</text><line x1="492.4" y1="504.75" x2="879.4" y2="504.75" stroke="#bdbdbd" stroke-width="1.2"/><text x="488.9" y="508.75" font-size="11" text-anchor="end" fill="#000" font-family="Liberation Sans">2</text><line x1="492.4" y1="475.20" x2="879.4" y2="475.20" stroke="#bdbdbd" stroke-width="1.2"/><text x="488.9" y="479.20" font-size="11" text-anchor="end" fill="#000" font-family="Liberation Sans">4</text><line x1="492.4" y1="445.65" x2="879.4" y2="445.65" stroke="#bdbdbd" stroke-width="1.2"/><text x="488.9" y="449.65" font-size="11" text-anchor="end" fill="#000" font-family="Liberation Sans">6</text><line x1="492.4" y1="416.10" x2="879.4" y2="416.10" stroke="#bdbdbd" stroke-width="1.2"/><text x="488.9" y="420.10" font-size="11" text-anchor="end" fill="#000" font-family="Liberation Sans">8</text><line x1="492.4" y1="386.55" x2="879.4" y2="386.55" stroke="#bdbdbd" stroke-width="1.2"/><text x="488.9" y="390.55" font-size="11" text-anchor="end" fill="#000" font-family="Liberation Sans">10</text><line x1="492.4" y1="357.00" x2="879.4" y2="357.00" stroke="#bdbdbd" stroke-width="1.2"/><text x="488.9" y="361.00" font-size="11" text-anchor="end" fill="#000" font-family="Liberation Sans">12</text><line x1="497.4" y1="357" x2="497.4" y2="538.3" stroke="#9a9a9a" stroke-width="1.2"/><line x1="879.4" y1="357" x2="879.4" y2="534.3" stroke="#bdbdbd" stroke-width="1.2"/><line x1="497.4" y1="534.3" x2="879.4" y2="534.3" stroke="#a8a8a8" stroke-width="1.2"/><line x1="497.40" y1="534.3" x2="497.40" y2="538.8" stroke="#a8a8a8" stroke-width="1"/><line x1="502.86" y1="534.3" x2="502.86" y2="538.8" stroke="#d0d0d0" stroke-width="1"/><line x1="508.31" y1="534.3" x2="508.31" y2="538.8" stroke="#d0d0d0" stroke-width="1"/><line x1="513.77" y1="534.3" x2="513.77" y2="538.8" stroke="#a8a8a8" stroke-width="1"/><line x1="519.23" y1="534.3" x2="519.23" y2="538.8" stroke="#d0d0d0" stroke-width="1"/><line x1="524.69" y1="534.3" x2="524.69" y2="538.8" stroke="#d0d0d0" stroke-width="1"/><line x1="530.14" y1="534.3" x2="530.14" y2="538.8" stroke="#a8a8a8" stroke-width="1"/><line x1="535.60" y1="534.3" x2="535.60" y2="538.8" stroke="#d0d0d0" stroke-width="1"/><line x1="541.06" y1="534.3" x2="541.06" y2="538.8" stroke="#d0d0d0" stroke-width="1"/><line x1="546.51" y1="534.3" x2="546.51" y2="538.8" stroke="#a8a8a8" stroke-width="1"/><line x1="551.97" y1="534.3" x2="551.97" y2="538.8" stroke="#d0d0d0" stroke-width="1"/><line x1="557.43" y1="534.3" x2="557.43" y2="538.8" stroke="#d0d0d0" stroke-width="1"/><line x1="562.89" y1="534.3" x2="562.89" y2="538.8" stroke="#a8a8a8" stroke-width="1"/><line x1="568.34" y1="534.3" x2="568.34" y2="538.8" stroke="#d0d0d0" stroke-width="1"/><line x1="573.80" y1="534.3" x2="573.80" y2="538.8" stroke="#d0d0d0" stroke-width="1"/><line x1="579.26" y1="534.3" x2="579.26" y2="538.8" stroke="#a8a8a8" stroke-width="1"/><line x1="584.71" y1="534.3" x2="584.71" y2="538.8" stroke="#d0d0d0" stroke-width="1"/><line x1="590.17" y1="534.3" x2="590.17" y2="538.8" stroke="#d0d0d0" stroke-width="1"/><line x1="595.63" y1="534.3" x2="595.63" y2="538.8" stroke="#a8a8a8" stroke-width="1"/><line x1="601.09" y1="534.3" x2="601.09" y2="538.8" stroke="#d0d0d0" stroke-width="1"/><line x1="606.54" y1="534.3" x2="606.54" y2="538.8" stroke="#d0d0d0" stroke-width="1"/><line x1="612.00" y1="534.3" x2="612.00" y2="538.8" stroke="#a8a8a8" stroke-width="1"/><line x1="617.46" y1="534.3" x2="617.46" y2="538.8" stroke="#d0d0d0" stroke-width="1"/><line x1="622.91" y1="534.3" x2="622.91" y2="538.8" stroke="#d0d0d0" stroke-width="1"/><line x1="628.37" y1="534.3" x2="628.37" y2="538.8" stroke="#a8a8a8" stroke-width="1"/><line x1="633.83" y1="534.3" x2="633.83" y2="538.8" stroke="#d0d0d0" stroke-width="1"/><line x1="639.29" y1="534.3" x2="639.29" y2="538.8" stroke="#d0d0d0" stroke-width="1"/><line x1="644.74" y1="534.3" x2="644.74" y2="538.8" stroke="#a8a8a8" stroke-width="1"/><line x1="650.20" y1="534.3" x2="650.20" y2="538.8" stroke="#d0d0d0" stroke-width="1"/><line x1="655.66" y1="534.3" x2="655.66" y2="538.8" stroke="#d0d0d0" stroke-width="1"/><line x1="661.11" y1="534.3" x2="661.11" y2="538.8" stroke="#a8a8a8" stroke-width="1"/><line x1="666.57" y1="534.3" x2="666.57" y2="538.8" stroke="#d0d0d0" stroke-width="1"/><line x1="672.03" y1="534.3" x2="672.03" y2="538.8" stroke="#d0d0d0" stroke-width="1"/><line x1="677.49" y1="534.3" x2="677.49" y2="538.8" stroke="#a8a8a8" stroke-width="1"/><line x1="682.94" y1="534.3" x2="682.94" y2="538.8" stroke="#d0d0d0" stroke-width="1"/><line x1="688.40" y1="534.3" x2="688.40" y2="538.8" stroke="#d0d0d0" stroke-width="1"/><line x1="693.86" y1="534.3" x2="693.86" y2="538.8" stroke="#a8a8a8" stroke-width="1"/><line x1="699.31" y1="534.3" x2="699.31" y2="538.8" stroke="#d0d0d0" stroke-width="1"/><line x1="704.77" y1="534.3" x2="704.77" y2="538.8" stroke="#d0d0d0" stroke-width="1"/><line x1="710.23" y1="534.3" x2="710.23" y2="538.8" stroke="#a8a8a8" stroke-width="1"/><line x1="715.69" y1="534.3" x2="715.69" y2="538.8" stroke="#d0d0d0" stroke-width="1"/><line x1="721.14" y1="534.3" x2="721.14" y2="538.8" stroke="#d0d0d0" stroke-width="1"/><line x1="726.60" y1="534.3" x2="726.60" y2="538.8" stroke="#a8a8a8" stroke-width="1"/><line x1="732.06" y1="534.3" x2="732.06" y2="538.8" stroke="#d0d0d0" stroke-width="1"/><line x1="737.51" y1="534.3" x2="737.51" y2="538.8" stroke="#d0d0d0" stroke-width="1"/><line x1="742.97" y1="534.3" x2="742.97" y2="538.8" stroke="#a8a8a8" stroke-width="1"/><line x1="748.43" y1="534.3" x2="748.43" y2="538.8" stroke="#d0d0d0" stroke-width="1"/><line x1="753.89" y1="534.3" x2="753.89" y2="538.8" stroke="#d0d0d0" stroke-width="1"/><line x1="759.34" y1="534.3" x2="759.34" y2="538.8" stroke="#a8a8a8" stroke-width="1"/><line x1="764.80" y1="534.3" x2="764.80" y2="538.8" stroke="#d0d0d0" stroke-width="1"/><line x1="770.26" y1="534.3" x2="770.26" y2="538.8" stroke="#d0d0d0" stroke-width="1"/><line x1="775.71" y1="534.3" x2="775.71" y2="538.8" stroke="#a8a8a8" stroke-width="1"/><line x1="781.17" y1="534.3" x2="781.17" y2="538.8" stroke="#d0d0d0" stroke-width="1"/><line x1="786.63" y1="534.3" x2="786.63" y2="538.8" stroke="#d0d0d0" stroke-width="1"/><line x1="792.09" y1="534.3" x2="792.09" y2="538.8" stroke="#a8a8a8" stroke-width="1"/><line x1="797.54" y1="534.3" x2="797.54" y2="538.8" stroke="#d0d0d0" stroke-width="1"/><line x1="803.00" y1="534.3" x2="803.00" y2="538.8" stroke="#d0d0d0" stroke-width="1"/><line x1="808.46" y1="534.3" x2="808.46" y2="538.8" stroke="#a8a8a8" stroke-width="1"/><line x1="813.91" y1="534.3" x2="813.91" y2="538.8" stroke="#d0d0d0" stroke-width="1"/><line x1="819.37" y1="534.3" x2="819.37" y2="538.8" stroke="#d0d0d0" stroke-width="1"/><line x1="824.83" y1="534.3" x2="824.83" y2="538.8" stroke="#a8a8a8" stroke-width="1"/><line x1="830.29" y1="534.3" x2="830.29" y2="538.8" stroke="#d0d0d0" stroke-width="1"/><line x1="835.74" y1="534.3" x2="835.74" y2="538.8" stroke="#d0d0d0" stroke-width="1"/><line x1="841.20" y1="534.3" x2="841.20" y2="538.8" stroke="#a8a8a8" stroke-width="1"/><line x1="846.66" y1="534.3" x2="846.66" y2="538.8" stroke="#d0d0d0" stroke-width="1"/><line x1="852.11" y1="534.3" x2="852.11" y2="538.8" stroke="#d0d0d0" stroke-width="1"/><line x1="857.57" y1="534.3" x2="857.57" y2="538.8" stroke="#a8a8a8" stroke-width="1"/><line x1="863.03" y1="534.3" x2="863.03" y2="538.8" stroke="#d0d0d0" stroke-width="1"/><line x1="868.49" y1="534.3" x2="868.49" y2="538.8" stroke="#d0d0d0" stroke-width="1"/><line x1="873.94" y1="534.3" x2="873.94" y2="538.8" stroke="#a8a8a8" stroke-width="1"/><line x1="879.40" y1="534.3" x2="879.40" y2="538.8" stroke="#d0d0d0" stroke-width="1"/><text x="497.40" y="552.6" font-size="10.5" text-anchor="middle" fill="#000" font-family="Liberation Sans">1</text><text x="513.77" y="552.6" font-size="10.5" text-anchor="middle" fill="#000" font-family="Liberation Sans">4</text><text x="530.14" y="552.6" font-size="10.5" text-anchor="middle" fill="#000" font-family="Liberation Sans">7</text><text x="546.51" y="552.6" font-size="10.5" text-anchor="middle" fill="#000" font-family="Liberation Sans">10</text><text x="562.89" y="552.6" font-size="10.5" text-anchor="middle" fill="#000" font-family="Liberation Sans">13</text><text x="579.26" y="552.6" font-size="10.5" text-anchor="middle" fill="#000" font-family="Liberation Sans">16</text><text x="595.63" y="552.6" font-size="10.5" text-anchor="middle" fill="#000" font-family="Liberation Sans">19</text><text x="612.00" y="552.6" font-size="10.5" text-anchor="middle" fill="#000" font-family="Liberation Sans">22</text><text x="628.37" y="552.6" font-size="10.5" text-anchor="middle" fill="#000" font-family="Liberation Sans">25</text><text x="644.74" y="552.6" font-size="10.5" text-anchor="middle" fill="#000" font-family="Liberation Sans">28</text><text x="661.11" y="552.6" font-size="10.5" text-anchor="middle" fill="#000" font-family="Liberation Sans">31</text><text x="677.49" y="552.6" font-size="10.5" text-anchor="middle" fill="#000" font-family="Liberation Sans">34</text><text x="693.86" y="552.6" font-size="10.5" text-anchor="middle" fill="#000" font-family="Liberation Sans">37</text><text x="710.23" y="552.6" font-size="10.5" text-anchor="middle" fill="#000" font-family="Liberation Sans">40</text><text x="726.60" y="552.6" font-size="10.5" text-anchor="middle" fill="#000" font-family="Liberation Sans">43</text><text x="742.97" y="552.6" font-size="10.5" text-anchor="middle" fill="#000" font-family="Liberation Sans">46</text><text x="759.34" y="552.6" font-size="10.5" text-anchor="middle" fill="#000" font-family="Liberation Sans">49</text><text x="775.71" y="552.6" font-size="10.5" text-anchor="middle" fill="#000" font-family="Liberation Sans">52</text><text x="792.09" y="552.6" font-size="10.5" text-anchor="middle" fill="#000" font-family="Liberation Sans">55</text><text x="808.46" y="552.6" font-size="10.5" text-anchor="middle" fill="#000" font-family="Liberation Sans">58</text><text x="824.83" y="552.6" font-size="10.5" text-anchor="middle" fill="#000" font-family="Liberation Sans">61</text><text x="841.20" y="552.6" font-size="10.5" text-anchor="middle" fill="#000" font-family="Liberation Sans">64</text><text x="857.57" y="552.6" font-size="10.5" text-anchor="middle" fill="#000" font-family="Liberation Sans">67</text><text x="873.94" y="552.6" font-size="10.5" text-anchor="middle" fill="#000" font-family="Liberation Sans">70</text><polyline points="497.40,534.30 502.86,534.30 508.31,534.30 513.77,534.30 519.23,534.30 524.69,534.30 530.14,534.30 535.60,534.30 541.06,534.30 546.51,534.30 551.97,534.30 557.43,534.30 562.89,534.30 568.34,534.30 573.80,534.30 579.26,534.30 584.71,386.55 590.17,534.30 595.63,534.30 601.09,534.30 606.54,534.30 612.00,534.30 617.46,534.30 622.91,534.30 628.37,534.30 633.83,534.30 639.29,534.30 644.74,534.30 650.20,534.30 655.66,534.30 661.11,445.65 666.57,445.65 672.03,460.42 677.49,430.88 682.94,445.65 688.40,460.42 693.86,445.65 699.31,460.42 704.77,430.88 710.23,445.65 715.69,445.65 721.14,460.42 726.60,430.88 732.06,445.65 737.51,460.42 742.97,460.42 748.43,430.88 753.89,460.42 759.34,430.88 764.80,445.65 770.26,460.42 775.71,445.65 781.17,445.65 786.63,445.65 792.09,430.88 797.54,460.42 803.00,445.65 808.46,430.88 813.91,460.42 819.37,430.88 824.83,445.65 830.29,460.42 835.74,430.88 841.20,460.42 846.66,445.65 852.11,475.20 857.57,460.42 863.03,445.65 868.49,460.42 873.94,460.42 879.40,460.42" fill="none" stroke="#33c9c9" stroke-width="1.1"/><path d="M492.80 534.30 L497.40 529.70 L502.00 534.30 L497.40 538.90 Z" fill="#33c9c9"/><path d="M498.26 534.30 L502.86 529.70 L507.46 534.30 L502.86 538.90 Z" fill="#33c9c9"/><path d="M503.71 534.30 L508.31 529.70 L512.91 534.30 L508.31 538.90 Z" fill="#33c9c9"/><path d="M509.17 534.30 L513.77 529.70 L518.37 534.30 L513.77 538.90 Z" fill="#33c9c9"/><path d="M514.63 534.30 L519.23 529.70 L523.83 534.30 L519.23 538.90 Z" fill="#33c9c9"/><path d="M520.09 534.30 L524.69 529.70 L529.29 534.30 L524.69 538.90 Z" fill="#33c9c9"/><path d="M525.54 534.30 L530.14 529.70 L534.74 534.30 L530.14 538.90 Z" fill="#33c9c9"/><path d="M531.00 534.30 L535.60 529.70 L540.20 534.30 L535.60 538.90 Z" fill="#33c9c9"/><path d="M536.46 534.30 L541.06 529.70 L545.66 534.30 L541.06 538.90 Z" fill="#33c9c9"/><path d="M541.91 534.30 L546.51 529.70 L551.11 534.30 L546.51 538.90 Z" fill="#33c9c9"/><path d="M547.37 534.30 L551.97 529.70 L556.57 534.30 L551.97 538.90 Z" fill="#33c9c9"/><path d="M552.83 534.30 L557.43 529.70 L562.03 534.30 L557.43 538.90 Z" fill="#33c9c9"/><path d="M558.29 534.30 L562.89 529.70 L567.49 534.30 L562.89 538.90 Z" fill="#33c9c9"/><path d="M563.74 534.30 L568.34 529.70 L572.94 534.30 L568.34 538.90 Z" fill="#33c9c9"/><path d="M569.20 534.30 L573.80 529.70 L578.40 534.30 L573.80 538.90 Z" fill="#33c9c9"/><path d="M574.66 534.30 L579.26 529.70 L583.86 534.30 L579.26 538.90 Z" fill="#33c9c9"/><path d="M580.11 386.55 L584.71 381.95 L589.31 386.55 L584.71 391.15 Z" fill="#33c9c9"/><path d="M585.57 534.30 L590.17 529.70 L594.77 534.30 L590.17 538.90 Z" fill="#33c9c9"/><path d="M591.03 534.30 L595.63 529.70 L600.23 534.30 L595.63 538.90 Z" fill="#33c9c9"/><path d="M596.49 534.30 L601.09 529.70 L605.69 534.30 L601.09 538.90 Z" fill="#33c9c9"/><path d="M601.94 534.30 L606.54 529.70 L611.14 534.30 L606.54 538.90 Z" fill="#33c9c9"/><path d="M607.40 534.30 L612.00 529.70 L616.60 534.30 L612.00 538.90 Z" fill="#33c9c9"/><path d="M612.86 534.30 L617.46 529.70 L622.06 534.30 L617.46 538.90 Z" fill="#33c9c9"/><path d="M618.31 534.30 L622.91 529.70 L627.51 534.30 L622.91 538.90 Z" fill="#33c9c9"/><path d="M623.77 534.30 L628.37 529.70 L632.97 534.30 L628.37 538.90 Z" fill="#33c9c9"/><path d="M629.23 534.30 L633.83 529.70 L638.43 534.30 L633.83 538.90 Z" fill="#33c9c9"/><path d="M634.69 534.30 L639.29 529.70 L643.89 534.30 L639.29 538.90 Z" fill="#33c9c9"/><path d="M640.14 534.30 L644.74 529.70 L649.34 534.30 L644.74 538.90 Z" fill="#33c9c9"/><path d="M645.60 534.30 L650.20 529.70 L654.80 534.30 L650.20 538.90 Z" fill="#33c9c9"/><path d="M651.06 534.30 L655.66 529.70 L660.26 534.30 L655.66 538.90 Z" fill="#33c9c9"/><path d="M656.51 445.65 L661.11 441.05 L665.71 445.65 L661.11 450.25 Z" fill="#33c9c9"/><path d="M661.97 445.65 L666.57 441.05 L671.17 445.65 L666.57 450.25 Z" fill="#33c9c9"/><path d="M667.43 460.42 L672.03 455.82 L676.63 460.42 L672.03 465.02 Z" fill="#33c9c9"/><path d="M672.89 430.88 L677.49 426.27 L682.09 430.88 L677.49 435.48 Z" fill="#33c9c9"/><path d="M678.34 445.65 L682.94 441.05 L687.54 445.65 L682.94 450.25 Z" fill="#33c9c9"/><path d="M683.80 460.42 L688.40 455.82 L693.00 460.42 L688.40 465.02 Z" fill="#33c9c9"/><path d="M689.26 445.65 L693.86 441.05 L698.46 445.65 L693.86 450.25 Z" fill="#33c9c9"/><path d="M694.71 460.42 L699.31 455.82 L703.91 460.42 L699.31 465.02 Z" fill="#33c9c9"/><path d="M700.17 430.88 L704.77 426.27 L709.37 430.88 L704.77 435.48 Z" fill="#33c9c9"/><path d="M705.63 445.65 L710.23 441.05 L714.83 445.65 L710.23 450.25 Z" fill="#33c9c9"/><path d="M711.09 445.65 L715.69 441.05 L720.29 445.65 L715.69 450.25 Z" fill="#33c9c9"/><path d="M716.54 460.42 L721.14 455.82 L725.74 460.42 L721.14 465.02 Z" fill="#33c9c9"/><path d="M722.00 430.88 L726.60 426.27 L731.20 430.88 L726.60 435.48 Z" fill="#33c9c9"/><path d="M727.46 445.65 L732.06 441.05 L736.66 445.65 L732.06 450.25 Z" fill="#33c9c9"/><path d="M732.91 460.42 L737.51 455.82 L742.11 460.42 L737.51 465.02 Z" fill="#33c9c9"/><path d="M738.37 460.42 L742.97 455.82 L747.57 460.42 L742.97 465.02 Z" fill="#33c9c9"/><path d="M743.83 430.88 L748.43 426.27 L753.03 430.88 L748.43 435.48 Z" fill="#33c9c9"/><path d="M749.29 460.42 L753.89 455.82 L758.49 460.42 L753.89 465.02 Z" fill="#33c9c9"/><path d="M754.74 430.88 L759.34 426.27 L763.94 430.88 L759.34 435.48 Z" fill="#33c9c9"/><path d="M760.20 445.65 L764.80 441.05 L769.40 445.65 L764.80 450.25 Z" fill="#33c9c9"/><path d="M765.66 460.42 L770.26 455.82 L774.86 460.42 L770.26 465.02 Z" fill="#33c9c9"/><path d="M771.11 445.65 L775.71 441.05 L780.31 445.65 L775.71 450.25 Z" fill="#33c9c9"/><path d="M776.57 445.65 L781.17 441.05 L785.77 445.65 L781.17 450.25 Z" fill="#33c9c9"/><path d="M782.03 445.65 L786.63 441.05 L791.23 445.65 L786.63 450.25 Z" fill="#33c9c9"/><path d="M787.49 430.88 L792.09 426.27 L796.69 430.88 L792.09 435.48 Z" fill="#33c9c9"/><path d="M792.94 460.42 L797.54 455.82 L802.14 460.42 L797.54 465.02 Z" fill="#33c9c9"/><path d="M798.40 445.65 L803.00 441.05 L807.60 445.65 L803.00 450.25 Z" fill="#33c9c9"/><path d="M803.86 430.88 L808.46 426.27 L813.06 430.88 L808.46 435.48 Z" fill="#33c9c9"/><path d="M809.31 460.42 L813.91 455.82 L818.51 460.42 L813.91 465.02 Z" fill="#33c9c9"/><path d="M814.77 430.88 L819.37 426.27 L823.97 430.88 L819.37 435.48 Z" fill="#33c9c9"/><path d="M820.23 445.65 L824.83 441.05 L829.43 445.65 L824.83 450.25 Z" fill="#33c9c9"/><path d="M825.69 460.42 L830.29 455.82 L834.89 460.42 L830.29 465.02 Z" fill="#33c9c9"/><path d="M831.14 430.88 L835.74 426.27 L840.34 430.88 L835.74 435.48 Z" fill="#33c9c9"/><path d="M836.60 460.42 L841.20 455.82 L845.80 460.42 L841.20 465.02 Z" fill="#33c9c9"/><path d="M842.06 445.65 L846.66 441.05 L851.26 445.65 L846.66 450.25 Z" fill="#33c9c9"/><path d="M847.51 475.20 L852.11 470.60 L856.71 475.20 L852.11 479.80 Z" fill="#33c9c9"/><path d="M852.97 460.42 L857.57 455.82 L862.17 460.42 L857.57 465.02 Z" fill="#33c9c9"/><path d="M858.43 445.65 L863.03 441.05 L867.63 445.65 L863.03 450.25 Z" fill="#33c9c9"/><path d="M863.89 460.42 L868.49 455.82 L873.09 460.42 L868.49 465.02 Z" fill="#33c9c9"/><path d="M869.34 460.42 L873.94 455.82 L878.54 460.42 L873.94 465.02 Z" fill="#33c9c9"/><path d="M874.80 460.42 L879.40 455.82 L884.00 460.42 L879.40 465.02 Z" fill="#33c9c9"/></svg>
<svg style="left:0;top:0;overflow:hidden" width="1164" height="971" viewBox="0 0 1164 971"><rect x="466" y="558" width="434" height="262" fill="#fff"/><rect x="466" y="558" width="1" height="262" fill="#33c9c9"/><rect x="466" y="558" width="434" height="2" fill="#8fdfdf"/><rect x="898" y="558" width="2" height="262" fill="#8fdfdf"/><rect x="466" y="819" width="434" height="1" fill="#33c9c9"/><text x="667.3" y="587.1" font-size="14.5" text-anchor="middle" fill="#000" font-family="Liberation Sans" textLength="41.2" lengthAdjust="spacingAndGlyphs">1 pass</text><line x1="494.4" y1="783.90" x2="880.6" y2="783.90" stroke="#bdbdbd" stroke-width="1.2"/><text x="490.9" y="787.90" font-size="11" text-anchor="end" fill="#000" font-family="Liberation Sans">0</text><line x1="494.4" y1="757.90" x2="880.6" y2="757.90" stroke="#bdbdbd" stroke-width="1.2"/><text x="490.9" y="761.90" font-size="11" text-anchor="end" fill="#000" font-family="Liberation Sans">1</text><line x1="494.4" y1="731.90" x2="880.6" y2="731.90" stroke="#bdbdbd" stroke-width="1.2"/><text x="490.9" y="735.90" font-size="11" text-anchor="end" fill="#000" font-family="Liberation Sans">2</text><line x1="494.4" y1="705.90" x2="880.6" y2="705.90" stroke="#bdbdbd" stroke-width="1.2"/><text x="490.9" y="709.90" font-size="11" text-anchor="end" fill="#000" font-family="Liberation Sans">3</text><line x1="494.4" y1="679.90" x2="880.6" y2="679.90" stroke="#bdbdbd" stroke-width="1.2"/><text x="490.9" y="683.90" font-size="11" text-anchor="end" fill="#000" font-family="Liberation Sans">4</text><line x1="494.4" y1="653.90" x2="880.6" y2="653.90" stroke="#bdbdbd" stroke-width="1.2"/><text x="490.9" y="657.90" font-size="11" text-anchor="end" fill="#000" font-family="Liberation Sans">5</text><line x1="494.4" y1="627.90" x2="880.6" y2="627.90" stroke="#bdbdbd" stroke-width="1.2"/><text x="490.9" y="631.90" font-size="11" text-anchor="end" fill="#000" font-family="Liberation Sans">6</text><line x1="494.4" y1="601.90" x2="880.6" y2="601.90" stroke="#bdbdbd" stroke-width="1.2"/><text x="490.9" y="605.90" font-size="11" text-anchor="end" fill="#000" font-family="Liberation Sans">7</text><line x1="499.4" y1="601.9" x2="499.4" y2="787.9" stroke="#9a9a9a" stroke-width="1.2"/><line x1="880.6" y1="601.9" x2="880.6" y2="783.9" stroke="#bdbdbd" stroke-width="1.2"/><line x1="499.4" y1="783.9" x2="880.6" y2="783.9" stroke="#a8a8a8" stroke-width="1.2"/><line x1="499.40" y1="783.9" x2="499.40" y2="788.4" stroke="#a8a8a8" stroke-width="1"/><line x1="504.85" y1="783.9" x2="504.85" y2="788.4" stroke="#d0d0d0" stroke-width="1"/><line x1="510.29" y1="783.9" x2="510.29" y2="788.4" stroke="#d0d0d0" stroke-width="1"/><line x1="515.74" y1="783.9" x2="515.74" y2="788.4" stroke="#a8a8a8" stroke-width="1"/><line x1="521.18" y1="783.9" x2="521.18" y2="788.4" stroke="#d0d0d0" stroke-width="1"/><line x1="526.63" y1="783.9" x2="526.63" y2="788.4" stroke="#d0d0d0" stroke-width="1"/><line x1="532.07" y1="783.9" x2="532.07" y2="788.4" stroke="#a8a8a8" stroke-width="1"/><line x1="537.52" y1="783.9" x2="537.52" y2="788.4" stroke="#d0d0d0" stroke-width="1"/><line x1="542.97" y1="783.9" x2="542.97" y2="788.4" stroke="#d0d0d0" stroke-width="1"/><line x1="548.41" y1="783.9" x2="548.41" y2="788.4" stroke="#a8a8a8" stroke-width="1"/><line x1="553.86" y1="783.9" x2="553.86" y2="788.4" stroke="#d0d0d0" stroke-width="1"/><line x1="559.30" y1="783.9" x2="559.30" y2="788.4" stroke="#d0d0d0" stroke-width="1"/><line x1="564.75" y1="783.9" x2="564.75" y2="788.4" stroke="#a8a8a8" stroke-width="1"/><line x1="570.19" y1="783.9" x2="570.19" y2="788.4" stroke="#d0d0d0" stroke-width="1"/><line x1="575.64" y1="783.9" x2="575.64" y2="788.4" stroke="#d0d0d0" stroke-width="1"/><line x1="581.09" y1="783.9" x2="581.09" y2="788.4" stroke="#a8a8a8" stroke-width="1"/><line x1="586.53" y1="783.9" x2="586.53" y2="788.4" stroke="#d0d0d0" stroke-width="1"/><line x1="591.98" y1="783.9" x2="591.98" y2="788.4" stroke="#d0d0d0" stroke-width="1"/><line x1="597.42" y1="783.9" x2="597.42" y2="788.4" stroke="#a8a8a8" stroke-width="1"/><line x1="602.87" y1="783.9" x2="602.87" y2="788.4" stroke="#d0d0d0" stroke-width="1"/><line x1="608.31" y1="783.9" x2="608.31" y2="788.4" stroke="#d0d0d0" stroke-width="1"/><line x1="613.76" y1="783.9" x2="613.76" y2="788.4" stroke="#a8a8a8" stroke-width="1"/><line x1="619.21" y1="783.9" x2="619.21" y2="788.4" stroke="#d0d0d0" stroke-width="1"/><line x1="624.65" y1="783.9" x2="624.65" y2="788.4" stroke="#d0d0d0" stroke-width="1"/><line x1="630.10" y1="783.9" x2="630.10" y2="788.4" stroke="#a8a8a8" stroke-width="1"/><line x1="635.54" y1="783.9" x2="635.54" y2="788.4" stroke="#d0d0d0" stroke-width="1"/><line x1="640.99" y1="783.9" x2="640.99" y2="788.4" stroke="#d0d0d0" stroke-width="1"/><line x1="646.43" y1="783.9" x2="646.43" y2="788.4" stroke="#a8a8a8" stroke-width="1"/><line x1="651.88" y1="783.9" x2="651.88" y2="788.4" stroke="#d0d0d0" stroke-width="1"/><line x1="657.33" y1="783.9" x2="657.33" y2="788.4" stroke="#d0d0d0" stroke-width="1"/><line x1="662.77" y1="783.9" x2="662.77" y2="788.4" stroke="#a8a8a8" stroke-width="1"/><line x1="668.22" y1="783.9" x2="668.22" y2="788.4" stroke="#d0d0d0" stroke-width="1"/><line x1="673.66" y1="783.9" x2="673.66" y2="788.4" stroke="#d0d0d0" stroke-width="1"/><line x1="679.11" y1="783.9" x2="679.11" y2="788.4" stroke="#a8a8a8" stroke-width="1"/><line x1="684.55" y1="783.9" x2="684.55" y2="788.4" stroke="#d0d0d0" stroke-width="1"/><line x1="690.00" y1="783.9" x2="690.00" y2="788.4" stroke="#d0d0d0" stroke-width="1"/><line x1="695.45" y1="783.9" x2="695.45" y2="788.4" stroke="#a8a8a8" stroke-width="1"/><line x1="700.89" y1="783.9" x2="700.89" y2="788.4" stroke="#d0d0d0" stroke-width="1"/><line x1="706.34" y1="783.9" x2="706.34" y2="788.4" stroke="#d0d0d0" stroke-width="1"/><line x1="711.78" y1="783.9" x2="711.78" y2="788.4" stroke="#a8a8a8" stroke-width="1"/><line x1="717.23" y1="783.9" x2="717.23" y2="788.4" stroke="#d0d0d0" stroke-width="1"/><line x1="722.67" y1="783.9" x2="722.67" y2="788.4" stroke="#d0d0d0" stroke-width="1"/><line x1="728.12" y1="783.9" x2="728.12" y2="788.4" stroke="#a8a8a8" stroke-width="1"/><line x1="733.57" y1="783.9" x2="733.57" y2="788.4" stroke="#d0d0d0" stroke-width="1"/><line x1="739.01" y1="783.9" x2="739.01" y2="788.4" stroke="#d0d0d0" stroke-width="1"/><line x1="744.46" y1="783.9" x2="744.46" y2="788.4" stroke="#a8a8a8" stroke-width="1"/><line x1="749.90" y1="783.9" x2="749.90" y2="788.4" stroke="#d0d0d0" stroke-width="1"/><line x1="755.35" y1="783.9" x2="755.35" y2="788.4" stroke="#d0d0d0" stroke-width="1"/><line x1="760.79" y1="783.9" x2="760.79" y2="788.4" stroke="#a8a8a8" stroke-width="1"/><line x1="766.24" y1="783.9" x2="766.24" y2="788.4" stroke="#d0d0d0" stroke-width="1"/><line x1="771.69" y1="783.9" x2="771.69" y2="788.4" stroke="#d0d0d0" stroke-width="1"/><line x1="777.13" y1="783.9" x2="777.13" y2="788.4" stroke="#a8a8a8" stroke-width="1"/><line x1="782.58" y1="783.9" x2="782.58" y2="788.4" stroke="#d0d0d0" stroke-width="1"/><line x1="788.02" y1="783.9" x2="788.02" y2="788.4" stroke="#d0d0d0" stroke-width="1"/><line x1="793.47" y1="783.9" x2="793.47" y2="788.4" stroke="#a8a8a8" stroke-width="1"/><line x1="798.91" y1="783.9" x2="798.91" y2="788.4" stroke="#d0d0d0" stroke-width="1"/><line x1="804.36" y1="783.9" x2="804.36" y2="788.4" stroke="#d0d0d0" stroke-width="1"/><line x1="809.81" y1="783.9" x2="809.81" y2="788.4" stroke="#a8a8a8" stroke-width="1"/><line x1="815.25" y1="783.9" x2="815.25" y2="788.4" stroke="#d0d0d0" stroke-width="1"/><line x1="820.70" y1="783.9" x2="820.70" y2="788.4" stroke="#d0d0d0" stroke-width="1"/><line x1="826.14" y1="783.9" x2="826.14" y2="788.4" stroke="#a8a8a8" stroke-width="1"/><line x1="831.59" y1="783.9" x2="831.59" y2="788.4" stroke="#d0d0d0" stroke-width="1"/><line x1="837.03" y1="783.9" x2="837.03" y2="788.4" stroke="#d0d0d0" stroke-width="1"/><line x1="842.48" y1="783.9" x2="842.48" y2="788.4" stroke="#a8a8a8" stroke-width="1"/><line x1="847.93" y1="783.9" x2="847.93" y2="788.4" stroke="#d0d0d0" stroke-width="1"/><line x1="853.37" y1="783.9" x2="853.37" y2="788.4" stroke="#d0d0d0" stroke-width="1"/><line x1="858.82" y1="783.9" x2="858.82" y2="788.4" stroke="#a8a8a8" stroke-width="1"/><line x1="864.26" y1="783.9" x2="864.26" y2="788.4" stroke="#d0d0d0" stroke-width="1"/><line x1="869.71" y1="783.9" x2="869.71" y2="788.4" stroke="#d0d0d0" stroke-width="1"/><line x1="875.15" y1="783.9" x2="875.15" y2="788.4" stroke="#a8a8a8" stroke-width="1"/><line x1="880.60" y1="783.9" x2="880.60" y2="788.4" stroke="#d0d0d0" stroke-width="1"/><text x="499.40" y="801.5" font-size="10.5" text-anchor="middle" fill="#000" font-family="Liberation Sans">1</text><text x="515.74" y="801.5" font-size="10.5" text-anchor="middle" fill="#000" font-family="Liberation Sans">4</text><text x="532.07" y="801.5" font-size="10.5" text-anchor="middle" fill="#000" font-family="Liberation Sans">7</text><text x="548.41" y="801.5" font-size="10.5" text-anchor="middle" fill="#000" font-family="Liberation Sans">10</text><text x="564.75" y="801.5" font-size="10.5" text-anchor="middle" fill="#000" font-family="Liberation Sans">13</text><text x="581.09" y="801.5" font-size="10.5" text-anchor="middle" fill="#000" font-family="Liberation Sans">16</text><text x="597.42" y="801.5" font-size="10.5" text-anchor="middle" fill="#000" font-family="Liberation Sans">19</text><text x="613.76" y="801.5" font-size="10.5" text-anchor="middle" fill="#000" font-family="Liberation Sans">22</text><text x="630.10" y="801.5" font-size="10.5" text-anchor="middle" fill="#000" font-family="Liberation Sans">25</text><text x="646.43" y="801.5" font-size="10.5" text-anchor="middle" fill="#000" font-family="Liberation Sans">28</text><text x="662.77" y="801.5" font-size="10.5" text-anchor="middle" fill="#000" font-family="Liberation Sans">31</text><text x="679.11" y="801.5" font-size="10.5" text-anchor="middle" fill="#000" font-family="Liberation Sans">34</text><text x="695.45" y="801.5" font-size="10.5" text-anchor="middle" fill="#000" font-family="Liberation Sans">37</text><text x="711.78" y="801.5" font-size="10.5" text-anchor="middle" fill="#000" font-family="Liberation Sans">40</text><text x="728.12" y="801.5" font-size="10.5" text-anchor="middle" fill="#000" font-family="Liberation Sans">43</text><text x="744.46" y="801.5" font-size="10.5" text-anchor="middle" fill="#000" font-family="Liberation Sans">46</text><text x="760.79" y="801.5" font-size="10.5" text-anchor="middle" fill="#000" font-family="Liberation Sans">49</text><text x="777.13" y="801.5" font-size="10.5" text-anchor="middle" fill="#000" font-family="Liberation Sans">52</text><text x="793.47" y="801.5" font-size="10.5" text-anchor="middle" fill="#000" font-family="Liberation Sans">55</text><text x="809.81" y="801.5" font-size="10.5" text-anchor="middle" fill="#000" font-family="Liberation Sans">58</text><text x="826.14" y="801.5" font-size="10.5" text-anchor="middle" fill="#000" font-family="Liberation Sans">61</text><text x="842.48" y="801.5" font-size="10.5" text-anchor="middle" fill="#000" font-family="Liberation Sans">64</text><text x="858.82" y="801.5" font-size="10.5" text-anchor="middle" fill="#000" font-family="Liberation Sans">67</text><text x="875.15" y="801.5" font-size="10.5" text-anchor="middle" fill="#000" font-family="Liberation Sans">70</text><polyline points="499.40,783.90 504.85,783.90 510.29,783.90 515.74,783.90 521.18,783.90 526.63,783.90 532.07,783.90 537.52,783.90 542.97,783.90 548.41,783.90 553.86,783.90 559.30,783.90 564.75,783.90 570.19,767.65 575.64,751.40 581.09,735.15 586.53,718.90 591.98,735.15 597.42,751.40 602.87,767.65 608.31,783.90 613.76,783.90 619.21,783.90 624.65,783.90 630.10,783.90 635.54,783.90 640.99,783.90 646.43,774.15 651.88,754.65 657.33,727.02 662.77,688.02 668.22,658.77 673.66,640.90 679.11,629.52 684.55,632.77 690.00,634.40 695.45,632.77 700.89,632.77 706.34,629.52 711.78,627.90 717.23,627.90 722.67,629.52 728.12,631.15 733.57,632.77 739.01,636.02 744.46,634.40 749.90,631.15 755.35,631.15 760.79,627.90 766.24,629.52 771.69,632.77 777.13,629.52 782.58,629.52 788.02,627.90 793.47,624.65 798.91,627.90 804.36,626.27 809.81,624.65 815.25,627.90 820.70,624.65 826.14,627.90 831.59,631.15 837.03,632.77" fill="none" stroke="#33c9c9" stroke-width="1.1"/><path d="M494.80 783.90 L499.40 779.30 L504.00 783.90 L499.40 788.50 Z" fill="#33c9c9"/><path d="M500.25 783.90 L504.85 779.30 L509.45 783.90 L504.85 788.50 Z" fill="#33c9c9"/><path d="M505.69 783.90 L510.29 779.30 L514.89 783.90 L510.29 788.50 Z" fill="#33c9c9"/><path d="M511.14 783.90 L515.74 779.30 L520.34 783.90 L515.74 788.50 Z" fill="#33c9c9"/><path d="M516.58 783.90 L521.18 779.30 L525.78 783.90 L521.18 788.50 Z" fill="#33c9c9"/><path d="M522.03 783.90 L526.63 779.30 L531.23 783.90 L526.63 788.50 Z" fill="#33c9c9"/><path d="M527.47 783.90 L532.07 779.30 L536.67 783.90 L532.07 788.50 Z" fill="#33c9c9"/><path d="M532.92 783.90 L537.52 779.30 L542.12 783.90 L537.52 788.50 Z" fill="#33c9c9"/><path d="M538.37 783.90 L542.97 779.30 L547.57 783.90 L542.97 788.50 Z" fill="#33c9c9"/><path d="M543.81 783.90 L548.41 779.30 L553.01 783.90 L548.41 788.50 Z" fill="#33c9c9"/><path d="M549.26 783.90 L553.86 779.30 L558.46 783.90 L553.86 788.50 Z" fill="#33c9c9"/><path d="M554.70 783.90 L559.30 779.30 L563.90 783.90 L559.30 788.50 Z" fill="#33c9c9"/><path d="M560.15 783.90 L564.75 779.30 L569.35 783.90 L564.75 788.50 Z" fill="#33c9c9"/><path d="M565.59 767.65 L570.19 763.05 L574.79 767.65 L570.19 772.25 Z" fill="#33c9c9"/><path d="M571.04 751.40 L575.64 746.80 L580.24 751.40 L575.64 756.00 Z" fill="#33c9c9"/><path d="M576.49 735.15 L581.09 730.55 L585.69 735.15 L581.09 739.75 Z" fill="#33c9c9"/><path d="M581.93 718.90 L586.53 714.30 L591.13 718.90 L586.53 723.50 Z" fill="#33c9c9"/><path d="M587.38 735.15 L591.98 730.55 L596.58 735.15 L591.98 739.75 Z" fill="#33c9c9"/><path d="M592.82 751.40 L597.42 746.80 L602.02 751.40 L597.42 756.00 Z" fill="#33c9c9"/><path d="M598.27 767.65 L602.87 763.05 L607.47 767.65 L602.87 772.25 Z" fill="#33c9c9"/><path d="M603.71 783.90 L608.31 779.30 L612.91 783.90 L608.31 788.50 Z" fill="#33c9c9"/><path d="M609.16 783.90 L613.76 779.30 L618.36 783.90 L613.76 788.50 Z" fill="#33c9c9"/><path d="M614.61 783.90 L619.21 779.30 L623.81 783.90 L619.21 788.50 Z" fill="#33c9c9"/><path d="M620.05 783.90 L624.65 779.30 L629.25 783.90 L624.65 788.50 Z" fill="#33c9c9"/><path d="M625.50 783.90 L630.10 779.30 L634.70 783.90 L630.10 788.50 Z" fill="#33c9c9"/><path d="M630.94 783.90 L635.54 779.30 L640.14 783.90 L635.54 788.50 Z" fill="#33c9c9"/><path d="M636.39 783.90 L640.99 779.30 L645.59 783.90 L640.99 788.50 Z" fill="#33c9c9"/><path d="M641.83 774.15 L646.43 769.55 L651.03 774.15 L646.43 778.75 Z" fill="#33c9c9"/><path d="M647.28 754.65 L651.88 750.05 L656.48 754.65 L651.88 759.25 Z" fill="#33c9c9"/><path d="M652.73 727.02 L657.33 722.42 L661.93 727.02 L657.33 731.62 Z" fill="#33c9c9"/><path d="M658.17 688.02 L662.77 683.42 L667.37 688.02 L662.77 692.62 Z" fill="#33c9c9"/><path d="M663.62 658.77 L668.22 654.17 L672.82 658.77 L668.22 663.38 Z" fill="#33c9c9"/><path d="M669.06 640.90 L673.66 636.30 L678.26 640.90 L673.66 645.50 Z" fill="#33c9c9"/><path d="M674.51 629.52 L679.11 624.92 L683.71 629.52 L679.11 634.12 Z" fill="#33c9c9"/><path d="M679.95 632.77 L684.55 628.17 L689.15 632.77 L684.55 637.38 Z" fill="#33c9c9"/><path d="M685.40 634.40 L690.00 629.80 L694.60 634.40 L690.00 639.00 Z" fill="#33c9c9"/><path d="M690.85 632.77 L695.45 628.17 L700.05 632.77 L695.45 637.38 Z" fill="#33c9c9"/><path d="M696.29 632.77 L700.89 628.17 L705.49 632.77 L700.89 637.38 Z" fill="#33c9c9"/><path d="M701.74 629.52 L706.34 624.92 L710.94 629.52 L706.34 634.12 Z" fill="#33c9c9"/><path d="M707.18 627.90 L711.78 623.30 L716.38 627.90 L711.78 632.50 Z" fill="#33c9c9"/><path d="M712.63 627.90 L717.23 623.30 L721.83 627.90 L717.23 632.50 Z" fill="#33c9c9"/><path d="M718.07 629.52 L722.67 624.92 L727.27 629.52 L722.67 634.12 Z" fill="#33c9c9"/><path d="M723.52 631.15 L728.12 626.55 L732.72 631.15 L728.12 635.75 Z" fill="#33c9c9"/><path d="M728.97 632.77 L733.57 628.17 L738.17 632.77 L733.57 637.38 Z" fill="#33c9c9"/><path d="M734.41 636.02 L739.01 631.42 L743.61 636.02 L739.01 640.62 Z" fill="#33c9c9"/><path d="M739.86 634.40 L744.46 629.80 L749.06 634.40 L744.46 639.00 Z" fill="#33c9c9"/><path d="M745.30 631.15 L749.90 626.55 L754.50 631.15 L749.90 635.75 Z" fill="#33c9c9"/><path d="M750.75 631.15 L755.35 626.55 L759.95 631.15 L755.35 635.75 Z" fill="#33c9c9"/><path d="M756.19 627.90 L760.79 623.30 L765.39 627.90 L760.79 632.50 Z" fill="#33c9c9"/><path d="M761.64 629.52 L766.24 624.92 L770.84 629.52 L766.24 634.12 Z" fill="#33c9c9"/><path d="M767.09 632.77 L771.69 628.17 L776.29 632.77 L771.69 637.38 Z" fill="#33c9c9"/><path d="M772.53 629.52 L777.13 624.92 L781.73 629.52 L777.13 634.12 Z" fill="#33c9c9"/><path d="M777.98 629.52 L782.58 624.92 L787.18 629.52 L782.58 634.12 Z" fill="#33c9c9"/><path d="M783.42 627.90 L788.02 623.30 L792.62 627.90 L788.02 632.50 Z" fill="#33c9c9"/><path d="M788.87 624.65 L793.47 620.05 L798.07 624.65 L793.47 629.25 Z" fill="#33c9c9"/><path d="M794.31 627.90 L798.91 623.30 L803.51 627.90 L798.91 632.50 Z" fill="#33c9c9"/><path d="M799.76 626.27 L804.36 621.67 L808.96 626.27 L804.36 630.88 Z" fill="#33c9c9"/><path d="M805.21 624.65 L809.81 620.05 L814.41 624.65 L809.81 629.25 Z" fill="#33c9c9"/><path d="M810.65 627.90 L815.25 623.30 L819.85 627.90 L815.25 632.50 Z" fill="#33c9c9"/><path d="M816.10 624.65 L820.70 620.05 L825.30 624.65 L820.70 629.25 Z" fill="#33c9c9"/><path d="M821.54 627.90 L826.14 623.30 L830.74 627.90 L826.14 632.50 Z" fill="#33c9c9"/><path d="M826.99 631.15 L831.59 626.55 L836.19 631.15 L831.59 635.75 Z" fill="#33c9c9"/><path d="M832.43 632.77 L837.03 628.17 L841.63 632.77 L837.03 637.38 Z" fill="#33c9c9"/></svg>
<svg style="left:0;top:0;overflow:hidden" width="1164" height="971" viewBox="0 0 1164 971"><rect x="469" y="818" width="409" height="200" fill="#fff"/><rect x="469" y="818" width="2" height="200" fill="#8fdfdf"/><rect x="469" y="818" width="409" height="2" fill="#8fdfdf"/><rect x="877" y="818" width="1" height="200" fill="#33c9c9"/><text x="633.8" y="856" font-size="14.5" text-anchor="middle" fill="#000" font-family="Liberation Sans" textLength="56.0" lengthAdjust="spacingAndGlyphs">2 passes</text><line x1="500.9" y1="1008.34" x2="839.3" y2="1008.34" stroke="#bdbdbd" stroke-width="1.2"/><text x="497.4" y="1012.34" font-size="11" text-anchor="end" fill="#000" font-family="Liberation Sans">2</text><line x1="500.9" y1="983.31" x2="839.3" y2="983.31" stroke="#bdbdbd" stroke-width="1.2"/><text x="497.4" y="987.31" font-size="11" text-anchor="end" fill="#000" font-family="Liberation Sans">3</text><line x1="500.9" y1="958.29" x2="839.3" y2="958.29" stroke="#bdbdbd" stroke-width="1.2"/><text x="497.4" y="962.29" font-size="11" text-anchor="end" fill="#000" font-family="Liberation Sans">4</text><line x1="500.9" y1="933.26" x2="839.3" y2="933.26" stroke="#bdbdbd" stroke-width="1.2"/><text x="497.4" y="937.26" font-size="11" text-anchor="end" fill="#000" font-family="Liberation Sans">5</text><line x1="500.9" y1="908.23" x2="839.3" y2="908.23" stroke="#bdbdbd" stroke-width="1.2"/><text x="497.4" y="912.23" font-size="11" text-anchor="end" fill="#000" font-family="Liberation Sans">6</text><line x1="500.9" y1="883.20" x2="839.3" y2="883.20" stroke="#bdbdbd" stroke-width="1.2"/><text x="497.4" y="887.20" font-size="11" text-anchor="end" fill="#000" font-family="Liberation Sans">7</text><line x1="505.9" y1="883.2" x2="505.9" y2="1062.4" stroke="#9a9a9a" stroke-width="1.2"/><line x1="839.3" y1="883.2" x2="839.3" y2="1058.4" stroke="#bdbdbd" stroke-width="1.2"/><line x1="505.9" y1="1058.4" x2="839.3" y2="1058.4" stroke="#a8a8a8" stroke-width="1.2"/><line x1="505.90" y1="1058.4" x2="505.90" y2="1062.9" stroke="#a8a8a8" stroke-width="1"/><line x1="511.28" y1="1058.4" x2="511.28" y2="1062.9" stroke="#d0d0d0" stroke-width="1"/><line x1="516.65" y1="1058.4" x2="516.65" y2="1062.9" stroke="#d0d0d0" stroke-width="1"/><line x1="522.03" y1="1058.4" x2="522.03" y2="1062.9" stroke="#a8a8a8" stroke-width="1"/><line x1="527.41" y1="1058.4" x2="527.41" y2="1062.9" stroke="#d0d0d0" stroke-width="1"/><line x1="532.79" y1="1058.4" x2="532.79" y2="1062.9" stroke="#d0d0d0" stroke-width="1"/><line x1="538.16" y1="1058.4" x2="538.16" y2="1062.9" stroke="#a8a8a8" stroke-width="1"/><line x1="543.54" y1="1058.4" x2="543.54" y2="1062.9" stroke="#d0d0d0" stroke-width="1"/><line x1="548.92" y1="1058.4" x2="548.92" y2="1062.9" stroke="#d0d0d0" stroke-width="1"/><line x1="554.30" y1="1058.4" x2="554.30" y2="1062.9" stroke="#a8a8a8" stroke-width="1"/><line x1="559.67" y1="1058.4" x2="559.67" y2="1062.9" stroke="#d0d0d0" stroke-width="1"/><line x1="565.05" y1="1058.4" x2="565.05" y2="1062.9" stroke="#d0d0d0" stroke-width="1"/><line x1="570.43" y1="1058.4" x2="570.43" y2="1062.9" stroke="#a8a8a8" stroke-width="1"/><line x1="575.81" y1="1058.4" x2="575.81" y2="1062.9" stroke="#d0d0d0" stroke-width="1"/><line x1="581.18" y1="1058.4" x2="581.18" y2="1062.9" stroke="#d0d0d0" stroke-width="1"/><line x1="586.56" y1="1058.4" x2="586.56" y2="1062.9" stroke="#a8a8a8" stroke-width="1"/><line x1="591.94" y1="1058.4" x2="591.94" y2="1062.9" stroke="#d0d0d0" stroke-width="1"/><line x1="597.32" y1="1058.4" x2="597.32" y2="1062.9" stroke="#d0d0d0" stroke-width="1"/><line x1="602.69" y1="1058.4" x2="602.69" y2="1062.9" stroke="#a8a8a8" stroke-width="1"/><line x1="608.07" y1="1058.4" x2="608.07" y2="1062.9" stroke="#d0d0d0" stroke-width="1"/><line x1="613.45" y1="1058.4" x2="613.45" y2="1062.9" stroke="#d0d0d0" stroke-width="1"/><line x1="618.83" y1="1058.4" x2="618.83" y2="1062.9" stroke="#a8a8a8" stroke-width="1"/><line x1="624.20" y1="1058.4" x2="624.20" y2="1062.9" stroke="#d0d0d0" stroke-width="1"/><line x1="629.58" y1="1058.4" x2="629.58" y2="1062.9" stroke="#d0d0d0" stroke-width="1"/><line x1="634.96" y1="1058.4" x2="634.96" y2="1062.9" stroke="#a8a8a8" stroke-width="1"/><line x1="640.34" y1="1058.4" x2="640.34" y2="1062.9" stroke="#d0d0d0" stroke-width="1"/><line x1="645.71" y1="1058.4" x2="645.71" y2="1062.9" stroke="#d0d0d0" stroke-width="1"/><line x1="651.09" y1="1058.4" x2="651.09" y2="1062.9" stroke="#a8a8a8" stroke-width="1"/><line x1="656.47" y1="1058.4" x2="656.47" y2="1062.9" stroke="#d0d0d0" stroke-width="1"/><line x1="661.85" y1="1058.4" x2="661.85" y2="1062.9" stroke="#d0d0d0" stroke-width="1"/><line x1="667.22" y1="1058.4" x2="667.22" y2="1062.9" stroke="#a8a8a8" stroke-width="1"/><line x1="672.60" y1="1058.4" x2="672.60" y2="1062.9" stroke="#d0d0d0" stroke-width="1"/><line x1="677.98" y1="1058.4" x2="677.98" y2="1062.9" stroke="#d0d0d0" stroke-width="1"/><line x1="683.35" y1="1058.4" x2="683.35" y2="1062.9" stroke="#a8a8a8" stroke-width="1"/><line x1="688.73" y1="1058.4" x2="688.73" y2="1062.9" stroke="#d0d0d0" stroke-width="1"/><line x1="694.11" y1="1058.4" x2="694.11" y2="1062.9" stroke="#d0d0d0" stroke-width="1"/><line x1="699.49" y1="1058.4" x2="699.49" y2="1062.9" stroke="#a8a8a8" stroke-width="1"/><line x1="704.86" y1="1058.4" x2="704.86" y2="1062.9" stroke="#d0d0d0" stroke-width="1"/><line x1="710.24" y1="1058.4" x2="710.24" y2="1062.9" stroke="#d0d0d0" stroke-width="1"/><line x1="715.62" y1="1058.4" x2="715.62" y2="1062.9" stroke="#a8a8a8" stroke-width="1"/><line x1="721.00" y1="1058.4" x2="721.00" y2="1062.9" stroke="#d0d0d0" stroke-width="1"/><line x1="726.37" y1="1058.4" x2="726.37" y2="1062.9" stroke="#d0d0d0" stroke-width="1"/><line x1="731.75" y1="1058.4" x2="731.75" y2="1062.9" stroke="#a8a8a8" stroke-width="1"/><line x1="737.13" y1="1058.4" x2="737.13" y2="1062.9" stroke="#d0d0d0" stroke-width="1"/><line x1="742.51" y1="1058.4" x2="742.51" y2="1062.9" stroke="#d0d0d0" stroke-width="1"/><line x1="747.88" y1="1058.4" x2="747.88" y2="1062.9" stroke="#a8a8a8" stroke-width="1"/><line x1="753.26" y1="1058.4" x2="753.26" y2="1062.9" stroke="#d0d0d0" stroke-width="1"/><line x1="758.64" y1="1058.4" x2="758.64" y2="1062.9" stroke="#d0d0d0" stroke-width="1"/><line x1="764.02" y1="1058.4" x2="764.02" y2="1062.9" stroke="#a8a8a8" stroke-width="1"/><line x1="769.39" y1="1058.4" x2="769.39" y2="1062.9" stroke="#d0d0d0" stroke-width="1"/><line x1="774.77" y1="1058.4" x2="774.77" y2="1062.9" stroke="#d0d0d0" stroke-width="1"/><line x1="780.15" y1="1058.4" x2="780.15" y2="1062.9" stroke="#a8a8a8" stroke-width="1"/><line x1="785.53" y1="1058.4" x2="785.53" y2="1062.9" stroke="#d0d0d0" stroke-width="1"/><line x1="790.90" y1="1058.4" x2="790.90" y2="1062.9" stroke="#d0d0d0" stroke-width="1"/><line x1="796.28" y1="1058.4" x2="796.28" y2="1062.9" stroke="#a8a8a8" stroke-width="1"/><line x1="801.66" y1="1058.4" x2="801.66" y2="1062.9" stroke="#d0d0d0" stroke-width="1"/><line x1="807.04" y1="1058.4" x2="807.04" y2="1062.9" stroke="#d0d0d0" stroke-width="1"/><line x1="812.41" y1="1058.4" x2="812.41" y2="1062.9" stroke="#a8a8a8" stroke-width="1"/><line x1="817.79" y1="1058.4" x2="817.79" y2="1062.9" stroke="#d0d0d0" stroke-width="1"/><line x1="823.17" y1="1058.4" x2="823.17" y2="1062.9" stroke="#d0d0d0" stroke-width="1"/><line x1="828.55" y1="1058.4" x2="828.55" y2="1062.9" stroke="#a8a8a8" stroke-width="1"/><line x1="833.92" y1="1058.4" x2="833.92" y2="1062.9" stroke="#d0d0d0" stroke-width="1"/><line x1="839.30" y1="1058.4" x2="839.30" y2="1062.9" stroke="#d0d0d0" stroke-width="1"/><text x="505.90" y="1076" font-size="10.5" text-anchor="middle" fill="#000" font-family="Liberation Sans">1</text><text x="522.03" y="1076" font-size="10.5" text-anchor="middle" fill="#000" font-family="Liberation Sans">4</text><text x="538.16" y="1076" font-size="10.5" text-anchor="middle" fill="#000" font-family="Liberation Sans">7</text><text x="554.30" y="1076" font-size="10.5" text-anchor="middle" fill="#000" font-family="Liberation Sans">10</text><text x="570.43" y="1076" font-size="10.5" text-anchor="middle" fill="#000" font-family="Liberation Sans">13</text><text x="586.56" y="1076" font-size="10.5" text-anchor="middle" fill="#000" font-family="Liberation Sans">16</text><text x="602.69" y="1076" font-size="10.5" text-anchor="middle" fill="#000" font-family="Liberation Sans">19</text><text x="618.83" y="1076" font-size="10.5" text-anchor="middle" fill="#000" font-family="Liberation Sans">22</text><text x="634.96" y="1076" font-size="10.5" text-anchor="middle" fill="#000" font-family="Liberation Sans">25</text><text x="651.09" y="1076" font-size="10.5" text-anchor="middle" fill="#000" font-family="Liberation Sans">28</text><text x="667.22" y="1076" font-size="10.5" text-anchor="middle" fill="#000" font-family="Liberation Sans">31</text><text x="683.35" y="1076" font-size="10.5" text-anchor="middle" fill="#000" font-family="Liberation Sans">34</text><text x="699.49" y="1076" font-size="10.5" text-anchor="middle" fill="#000" font-family="Liberation Sans">37</text><text x="715.62" y="1076" font-size="10.5" text-anchor="middle" fill="#000" font-family="Liberation Sans">40</text><text x="731.75" y="1076" font-size="10.5" text-anchor="middle" fill="#000" font-family="Liberation Sans">43</text><text x="747.88" y="1076" font-size="10.5" text-anchor="middle" fill="#000" font-family="Liberation Sans">46</text><text x="764.02" y="1076" font-size="10.5" text-anchor="middle" fill="#000" font-family="Liberation Sans">49</text><text x="780.15" y="1076" font-size="10.5" text-anchor="middle" fill="#000" font-family="Liberation Sans">52</text><text x="796.28" y="1076" font-size="10.5" text-anchor="middle" fill="#000" font-family="Liberation Sans">55</text><text x="812.41" y="1076" font-size="10.5" text-anchor="middle" fill="#000" font-family="Liberation Sans">58</text><text x="828.55" y="1076" font-size="10.5" text-anchor="middle" fill="#000" font-family="Liberation Sans">61</text><polyline points="505.90,1058.40 511.28,1058.40 516.65,1058.40 522.03,1058.40 527.41,1058.40 532.79,1058.40 538.16,1058.40 543.54,1058.40 548.92,1058.40 554.30,1058.40 559.67,1057.42 565.05,1054.49 570.43,1048.62 575.81,1038.85 581.18,1028.09 586.56,1019.29 591.94,1015.38 597.32,1019.29 602.69,1028.09 608.07,1038.85 613.45,1048.62 618.83,1054.49 624.20,1057.42 629.58,1058.40 634.96,1057.81 640.34,1055.47 645.71,1049.70 651.09,1038.16 656.47,1020.27 661.85,997.30 667.22,971.88 672.60,948.90 677.98,931.40 683.35,920.25 688.73,915.17 694.11,913.21 699.49,912.33 704.86,911.65 710.24,910.58 715.62,909.79 721.00,909.70 726.37,910.38 731.75,911.55 737.13,912.63 742.51,913.31 747.88,913.02 753.26,912.14 758.64,911.36 764.02,910.58 769.39,910.38 774.77,910.38 780.15,909.79 785.53,909.21 790.90,908.33 796.28,907.35" fill="none" stroke="#33c9c9" stroke-width="1.1"/><path d="M501.30 1058.40 L505.90 1053.80 L510.50 1058.40 L505.90 1063.00 Z" fill="#33c9c9"/><path d="M506.68 1058.40 L511.28 1053.80 L515.88 1058.40 L511.28 1063.00 Z" fill="#33c9c9"/><path d="M512.05 1058.40 L516.65 1053.80 L521.25 1058.40 L516.65 1063.00 Z" fill="#33c9c9"/><path d="M517.43 1058.40 L522.03 1053.80 L526.63 1058.40 L522.03 1063.00 Z" fill="#33c9c9"/><path d="M522.81 1058.40 L527.41 1053.80 L532.01 1058.40 L527.41 1063.00 Z" fill="#33c9c9"/><path d="M528.19 1058.40 L532.79 1053.80 L537.39 1058.40 L532.79 1063.00 Z" fill="#33c9c9"/><path d="M533.56 1058.40 L538.16 1053.80 L542.76 1058.40 L538.16 1063.00 Z" fill="#33c9c9"/><path d="M538.94 1058.40 L543.54 1053.80 L548.14 1058.40 L543.54 1063.00 Z" fill="#33c9c9"/><path d="M544.32 1058.40 L548.92 1053.80 L553.52 1058.40 L548.92 1063.00 Z" fill="#33c9c9"/><path d="M549.70 1058.40 L554.30 1053.80 L558.90 1058.40 L554.30 1063.00 Z" fill="#33c9c9"/><path d="M555.07 1057.42 L559.67 1052.82 L564.27 1057.42 L559.67 1062.02 Z" fill="#33c9c9"/><path d="M560.45 1054.49 L565.05 1049.89 L569.65 1054.49 L565.05 1059.09 Z" fill="#33c9c9"/><path d="M565.83 1048.62 L570.43 1044.02 L575.03 1048.62 L570.43 1053.22 Z" fill="#33c9c9"/><path d="M571.21 1038.85 L575.81 1034.25 L580.41 1038.85 L575.81 1043.45 Z" fill="#33c9c9"/><path d="M576.58 1028.09 L581.18 1023.49 L585.78 1028.09 L581.18 1032.69 Z" fill="#33c9c9"/><path d="M581.96 1019.29 L586.56 1014.69 L591.16 1019.29 L586.56 1023.89 Z" fill="#33c9c9"/><path d="M587.34 1015.38 L591.94 1010.78 L596.54 1015.38 L591.94 1019.98 Z" fill="#33c9c9"/><path d="M592.72 1019.29 L597.32 1014.69 L601.92 1019.29 L597.32 1023.89 Z" fill="#33c9c9"/><path d="M598.09 1028.09 L602.69 1023.49 L607.29 1028.09 L602.69 1032.69 Z" fill="#33c9c9"/><path d="M603.47 1038.85 L608.07 1034.25 L612.67 1038.85 L608.07 1043.45 Z" fill="#33c9c9"/><path d="M608.85 1048.62 L613.45 1044.02 L618.05 1048.62 L613.45 1053.22 Z" fill="#33c9c9"/><path d="M614.23 1054.49 L618.83 1049.89 L623.43 1054.49 L618.83 1059.09 Z" fill="#33c9c9"/><path d="M619.60 1057.42 L624.20 1052.82 L628.80 1057.42 L624.20 1062.02 Z" fill="#33c9c9"/><path d="M624.98 1058.40 L629.58 1053.80 L634.18 1058.40 L629.58 1063.00 Z" fill="#33c9c9"/><path d="M630.36 1057.81 L634.96 1053.21 L639.56 1057.81 L634.96 1062.41 Z" fill="#33c9c9"/><path d="M635.74 1055.47 L640.34 1050.87 L644.94 1055.47 L640.34 1060.07 Z" fill="#33c9c9"/><path d="M641.11 1049.70 L645.71 1045.10 L650.31 1049.70 L645.71 1054.30 Z" fill="#33c9c9"/><path d="M646.49 1038.16 L651.09 1033.56 L655.69 1038.16 L651.09 1042.76 Z" fill="#33c9c9"/><path d="M651.87 1020.27 L656.47 1015.67 L661.07 1020.27 L656.47 1024.87 Z" fill="#33c9c9"/><path d="M657.25 997.30 L661.85 992.70 L666.45 997.30 L661.85 1001.90 Z" fill="#33c9c9"/><path d="M662.62 971.88 L667.22 967.28 L671.82 971.88 L667.22 976.48 Z" fill="#33c9c9"/><path d="M668.00 948.90 L672.60 944.30 L677.20 948.90 L672.60 953.50 Z" fill="#33c9c9"/><path d="M673.38 931.40 L677.98 926.80 L682.58 931.40 L677.98 936.00 Z" fill="#33c9c9"/><path d="M678.75 920.25 L683.35 915.65 L687.95 920.25 L683.35 924.85 Z" fill="#33c9c9"/><path d="M684.13 915.17 L688.73 910.57 L693.33 915.17 L688.73 919.77 Z" fill="#33c9c9"/><path d="M689.51 913.21 L694.11 908.61 L698.71 913.21 L694.11 917.81 Z" fill="#33c9c9"/><path d="M694.89 912.33 L699.49 907.73 L704.09 912.33 L699.49 916.93 Z" fill="#33c9c9"/><path d="M700.26 911.65 L704.86 907.05 L709.46 911.65 L704.86 916.25 Z" fill="#33c9c9"/><path d="M705.64 910.58 L710.24 905.98 L714.84 910.58 L710.24 915.18 Z" fill="#33c9c9"/><path d="M711.02 909.79 L715.62 905.19 L720.22 909.79 L715.62 914.39 Z" fill="#33c9c9"/><path d="M716.40 909.70 L721.00 905.10 L725.60 909.70 L721.00 914.30 Z" fill="#33c9c9"/><path d="M721.77 910.38 L726.37 905.78 L730.97 910.38 L726.37 914.98 Z" fill="#33c9c9"/><path d="M727.15 911.55 L731.75 906.95 L736.35 911.55 L731.75 916.15 Z" fill="#33c9c9"/><path d="M732.53 912.63 L737.13 908.03 L741.73 912.63 L737.13 917.23 Z" fill="#33c9c9"/><path d="M737.91 913.31 L742.51 908.71 L747.11 913.31 L742.51 917.91 Z" fill="#33c9c9"/><path d="M743.28 913.02 L747.88 908.42 L752.48 913.02 L747.88 917.62 Z" fill="#33c9c9"/><path d="M748.66 912.14 L753.26 907.54 L757.86 912.14 L753.26 916.74 Z" fill="#33c9c9"/><path d="M754.04 911.36 L758.64 906.76 L763.24 911.36 L758.64 915.96 Z" fill="#33c9c9"/><path d="M759.42 910.58 L764.02 905.98 L768.62 910.58 L764.02 915.18 Z" fill="#33c9c9"/><path d="M764.79 910.38 L769.39 905.78 L773.99 910.38 L769.39 914.98 Z" fill="#33c9c9"/><path d="M770.17 910.38 L774.77 905.78 L779.37 910.38 L774.77 914.98 Z" fill="#33c9c9"/><path d="M775.55 909.79 L780.15 905.19 L784.75 909.79 L780.15 914.39 Z" fill="#33c9c9"/><path d="M780.93 909.21 L785.53 904.61 L790.13 909.21 L785.53 913.81 Z" fill="#33c9c9"/><path d="M786.30 908.33 L790.90 903.73 L795.50 908.33 L790.90 912.93 Z" fill="#33c9c9"/><path d="M791.68 907.35 L796.28 902.75 L800.88 907.35 L796.28 911.95 Z" fill="#33c9c9"/></svg>
<div style="left:1094px;top:163px;width:17px;height:808px;background:#f0f0f0"></div>
<div style="left:1094px;top:165px;width:17px;height:3px;background:#000"></div>
<svg style="left:1098px;top:173px" width="9" height="6" viewBox="0 0 9 6"><path d="M1 5 L4.5 1.5 L8 5" stroke="#3a3a3a" stroke-width="1.7" fill="none"/></svg>
<div style="left:1095px;top:185px;width:15px;height:286px;background:#cdcdcd"></div>
<svg style="left:1098px;top:959px" width="9" height="6" viewBox="0 0 9 6"><path d="M1 1 L4.5 4.5 L8 1" stroke="#3a3a3a" stroke-width="1.7" fill="none"/></svg>
<div style="left:1111px;top:118px;width:1px;height:46px;background:#9f9f9f"></div>
<div style="left:1094px;top:163px;width:17px;height:1px;background:#8c8c8c"></div>
<div style="left:1112px;top:118px;width:6px;height:870px;background:#f7f7f7"></div>
<div style="left:1111px;top:164px;width:1px;height:824px;background:#dadada"></div>
<div style="left:1118px;top:118px;width:1px;height:870px;background:#a9a9a9"></div>
<div style="left:1119px;top:118px;width:38px;height:870px;background:#efefef"></div>
<div style="left:1156px;top:118px;width:2px;height:870px;background:#b5b5b5;border-right:1px solid #e8e8e8"></div>
<svg style="left:1113px;top:536px" width="5" height="36" viewBox="0 0 5 36"><path d="M1 0 L4 2.5 L1 5 Z M1 31 L4 33.5 L1 36 Z" fill="#555"/><rect x="2" y="9" width="2" height="2" fill="#777"/><rect x="2" y="13" width="2" height="2" fill="#777"/><rect x="2" y="17" width="2" height="2" fill="#777"/><rect x="2" y="21" width="2" height="2" fill="#777"/><rect x="2" y="25" width="2" height="2" fill="#777"/></svg>
<svg style="left:1133px;top:134px" width="11" height="11" viewBox="0 0 11 11"><path d="M0 1 H7 M0 3.5 H7 M0 6 H7" stroke="#1e2a3a" stroke-width="1.2"/><path d="M4 6.5 H10.5 L7.25 10 Z" fill="#111c2a"/></svg>
<div style="left:1127px;top:158px;width:23px;height:1px;background:#d8d8d8"></div>
<div style="left:1122px;top:162px;width:32px;height:32px;border:1px solid #a8a8a8;border-radius:4px"></div>
<svg style="left:1127px;top:165px" width="22" height="24" viewBox="0 0 22 24"><ellipse cx="11" cy="21.5" rx="8" ry="2" fill="#cfcfcf"/><path d="M11 1 L20 5.5 L11 10 L2 5.5 Z" fill="#42b4f6"/><path d="M11 1 L20 5.5 L15.5 7.75 L6.5 3.25 Z" fill="#7fd83a"/><path d="M6.5 3.25 L11 5.5 L6.5 7.75 L2 5.5 Z" fill="#1e9cf0"/><path d="M2 5.5 L11 10 V20 L2 15.5 Z" fill="#1e94ea"/><path d="M6.5 12.75 L11 15 V20 L6.5 17.75 Z" fill="#66cc22"/><path d="M11 10 L20 5.5 V15.5 L11 20 Z" fill="#66cc22"/><path d="M6.5 3.25 L15.5 7.75 M15.5 3.25 L6.5 7.75 M2 5.5 L11 10 L20 5.5 M11 10 V20 M2 10.5 L11 15 L20 10.5 M6.5 7.75 V17.75 M15.5 7.75 V17.75" stroke="#f0fff0" stroke-width="0.9" fill="none"/></svg>
<svg style="left:1128px;top:201px" width="20" height="22" viewBox="0 0 20 22"><ellipse cx="10" cy="20" rx="7" ry="1.6" fill="#d0d0d0"/><path d="M3 17 L9 6 L15 14 Z" fill="#1a70c8"/><path d="M9 8 Q14 4 16 12 Q12 16 9 13 Z" fill="#2a3a6a"/><path d="M11 14 Q16 18 18 13" stroke="#5ab030" stroke-width="2.5" fill="none"/><circle cx="5" cy="7" r="2.2" fill="#e86a9a"/><circle cx="13" cy="3" r="2" fill="#c060d0"/><path d="M17 2 L18 4.5 L20 4.5 L18.5 6 L19 8.5 L17 7 L15 8.5 L15.5 6 L14 4.5 L16 4.5 Z" fill="#f0d040"/><circle cx="18" cy="11" r="1.5" fill="#e84a6a"/><path d="M2 6 Q4 3 7 5" stroke="#d0801a" stroke-width="2" fill="none"/></svg>
<svg style="left:1127px;top:236px" width="22" height="22" viewBox="0 0 22 22"><ellipse cx="11" cy="20" rx="8" ry="1.6" fill="#d0d0d0"/><path d="M1 8 L16 2 L21 13 L6 19 Z" fill="#f4f8fc" stroke="#8a96a2" stroke-width="1"/><path d="M4 9 L15 5 L18.5 12.5 L7 16.5 Z" fill="#6ab8e8"/><path d="M7 16.5 L10 11 L13 13 L18.5 12.5 Z" fill="#5aa830"/><path d="M8 12 L11 8 L13 11 Z" fill="#f0f0f0" stroke="#555" stroke-width="0.6"/></svg>
<svg style="left:1126px;top:270px" width="24" height="24" viewBox="0 0 24 24"><ellipse cx="12" cy="22.5" rx="8" ry="1.6" fill="#d4d4d4"/><circle cx="12" cy="11.5" r="10.2" fill="#f29a1a"/><circle cx="12" cy="11.5" r="7.6" fill="#fff"/><path d="M17 6 L10.5 10.3 L13.5 12.7 Z" fill="#e53030"/><path d="M7 17 L13.5 12.7 L10.5 10.3 Z" fill="#3a78d0"/><text x="12" y="5.8" font-size="5" font-weight="bold" text-anchor="middle" fill="#222" font-family="Liberation Sans">N</text></svg>
<svg style="left:1126px;top:305px" width="24" height="24" viewBox="0 0 24 24"><ellipse cx="13" cy="22.5" rx="8" ry="1.5" fill="#d4d4d4"/><path d="M7 1 H16 L21 6 V20 H7 Z" fill="#e4f2fc" stroke="#3a8ad8" stroke-width="1"/><path d="M16 1 V6 H21" fill="#cfe6f8" stroke="#3a8ad8" stroke-width="0.8"/><path d="M1 19 Q5 19.5 6.5 13 L8 7 Q9 4 12 4.5" stroke="#1e3a6a" stroke-width="2" fill="none"/><path d="M4 10 H11" stroke="#1e3a6a" stroke-width="1.5"/><path d="M11 11 L18 18.5 M18 11 L11 18.5" stroke="#1e3a6a" stroke-width="1.9"/></svg>
<div style="left:0px;top:971px;width:1094px;height:17px;background:#f0f0f0"></div>
<div style="left:1094px;top:971px;width:18px;height:17px;background:#f0f0f0"></div>
<div style="left:1111px;top:971px;width:1px;height:17px;background:#fafafa"></div>
<div style="left:0px;top:971px;width:71px;height:1px;background:#8a8a8a"></div>
<div style="left:128px;top:971px;width:966px;height:1px;background:#8a8a8a"></div>
<div style="left:0px;top:163px;width:1px;height:825px;background:#8a8a8a"></div>
<div style="left:4px;top:973px;width:14px;height:14px;border:1px solid #dcdcdc;background:#f2f2f2"></div>
<div style="left:21px;top:973px;width:14px;height:14px;border:1px solid #dcdcdc;background:#f2f2f2"></div>
<div style="left:38px;top:973px;width:14px;height:14px;border:1px solid #dcdcdc;background:#f2f2f2"></div>
<div style="left:55px;top:973px;width:14px;height:14px;border:1px solid #dcdcdc;background:#f2f2f2"></div>
<svg style="left:6px;top:975px" width="60" height="10" viewBox="0 0 60 10"><path d="M2.5 1 V9" stroke="#a8a8a8" stroke-width="1.2"/><path d="M9 1.5 L5 5 L9 8.5 Z" fill="#b4b4b4"/><path d="M25 1.5 L21 5 L25 8.5 Z" fill="#b4b4b4"/><path d="M37.5 1.5 L41.5 5 L37.5 8.5 Z" fill="#b4b4b4"/><path d="M54 1.5 L58 5 L54 8.5 Z" fill="#b4b4b4"/><path d="M59.5 1 V9" stroke="#a8a8a8" stroke-width="1.2"/></svg>
<svg style="left:68px;top:970px" width="64" height="19" viewBox="0 0 64 19"><path d="M1.5 1 L9.5 17 H53 L61 1" fill="#fafafa" stroke="#6a6a6a" stroke-width="1.3"/></svg>
<div class="t" style="left:79.30px;top:973.66px;font-size:12px;line-height:12px;font-weight:bold;color:#000;transform:scaleX(0.9811);transform-origin:left top;">Sheet1</div>
<div style="left:887px;top:971px;width:6px;height:17px;background:#f0f0f0;border:1px solid #8a8a8a;border-top:none"></div>
<div style="left:893px;top:971px;width:201px;height:17px;background:#f0f0f0"></div>
<div style="left:893px;top:971px;width:201px;height:1px;background:#d0d0d0"></div>
<svg style="left:898px;top:975px" width="6" height="9" viewBox="0 0 6 9"><path d="M5 1 L1.5 4.5 L5 8" stroke="#3a3a3a" stroke-width="1.6" fill="none"/></svg>
<div style="left:909px;top:972px;width:79px;height:15px;background:#cdcdcd"></div>
<svg style="left:1080px;top:975px" width="6" height="9" viewBox="0 0 6 9"><path d="M1 1 L4.5 4.5 L1 8" stroke="#3a3a3a" stroke-width="1.6" fill="none"/></svg>
<div style="left:1091px;top:971px;width:3px;height:17px;background:#000"></div>
<div style="left:0px;top:988px;width:1158px;height:23px;background:#f0f0f0"></div>
<div style="left:0px;top:988px;width:1158px;height:1px;background:#dcdcdc"></div>
<div style="left:277px;top:993px;width:1px;height:16px;background:#a0a0a0"></div>
<div style="left:577px;top:993px;width:1px;height:16px;background:#a0a0a0"></div>
<div style="left:631px;top:993px;width:1px;height:16px;background:#a0a0a0"></div>
<div style="left:665px;top:993px;width:1px;height:16px;background:#a0a0a0"></div>
<div style="left:681px;top:993px;width:1px;height:16px;background:#a0a0a0"></div>
<div style="left:710px;top:993px;width:1px;height:16px;background:#a0a0a0"></div>
<div style="left:965px;top:993px;width:1px;height:16px;background:#a0a0a0"></div>
<div style="left:1118px;top:993px;width:1px;height:16px;background:#a0a0a0"></div>
<div class="t" style="left:10.30px;top:995.88px;font-size:11.5px;line-height:11.5px;color:#111;transform:scaleX(0.9629);transform-origin:left top;">Sheet 1 / 1</div>
<div class="t" style="left:283.50px;top:995.88px;font-size:11.5px;line-height:11.5px;color:#111;transform:scaleX(0.9347);transform-origin:left top;">PageStyle_Sheet1</div>
<div class="t" style="left:636.20px;top:995.88px;font-size:11.5px;line-height:11.5px;color:#111;transform:scaleX(0.8950);transform-origin:left top;">STD</div>
<div class="t" style="left:817.60px;top:995.88px;font-size:11.5px;line-height:11.5px;color:#111;transform:scaleX(1.0095);transform-origin:left top;">Sum=0</div>
<div class="t" style="left:1122.60px;top:995.88px;font-size:11.5px;line-height:11.5px;color:#111;transform:scaleX(0.9623);transform-origin:left top;">85 %</div>
<svg style="left:971px;top:996px" width="12" height="12" viewBox="0 0 12 12"><circle cx="5.5" cy="5.5" r="5" fill="#dbe6f0" stroke="#3a5a7a" stroke-width="1"/><path d="M3 5.5 H8" stroke="#1e2e3e" stroke-width="1.3"/></svg>
<div style="left:987px;top:1001px;width:107px;height:1px;background:#8a8a8a"></div>
<div style="left:1039px;top:996px;width:1px;height:10px;background:#8a8a8a"></div>
<svg style="left:1025px;top:997px" width="10" height="10" viewBox="0 0 10 10"><circle cx="5" cy="5" r="4.3" fill="#6a8aa8" stroke="#2a4a6a" stroke-width="1"/></svg>
<svg style="left:1099px;top:996px" width="12" height="12" viewBox="0 0 12 12"><circle cx="5.5" cy="5.5" r="5" fill="#dbe6f0" stroke="#3a5a7a" stroke-width="1"/><path d="M3 5.5 H8 M5.5 3 V8" stroke="#1e2e3e" stroke-width="1.3"/></svg>
<div style="left:1112px;top:988px;width:46px;height:1px;background:#a9a9a9"></div>
</body></html>
